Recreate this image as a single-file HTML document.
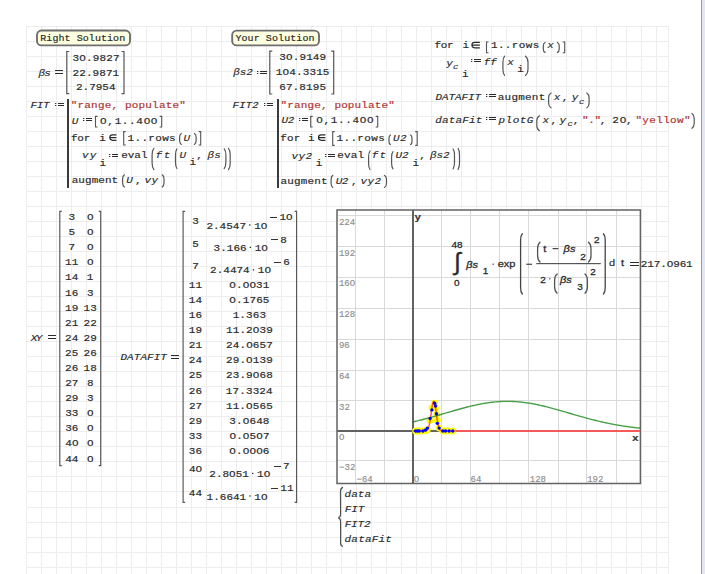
<!DOCTYPE html><html><head><meta charset="utf-8"><style>html,body{margin:0;padding:0;background:#fff;width:705px;height:574px;overflow:hidden}svg{display:block}</style></head><body><svg width="705" height="574" viewBox="0 0 705 574"><rect x="0" y="0" width="705" height="574" fill="#fff"/>
<rect x="26" y="26" width="1" height="548" fill="#ededed"/>
<rect x="41" y="26" width="1" height="548" fill="#ededed"/>
<rect x="56" y="26" width="1" height="548" fill="#ededed"/>
<rect x="71" y="26" width="1" height="548" fill="#ededed"/>
<rect x="86" y="26" width="1" height="548" fill="#ededed"/>
<rect x="101" y="26" width="1" height="548" fill="#ededed"/>
<rect x="116" y="26" width="1" height="548" fill="#ededed"/>
<rect x="131" y="26" width="1" height="548" fill="#ededed"/>
<rect x="146" y="26" width="1" height="548" fill="#ededed"/>
<rect x="161" y="26" width="1" height="548" fill="#ededed"/>
<rect x="176" y="26" width="1" height="548" fill="#ededed"/>
<rect x="191" y="26" width="1" height="548" fill="#ededed"/>
<rect x="206" y="26" width="1" height="548" fill="#ededed"/>
<rect x="221" y="26" width="1" height="548" fill="#ededed"/>
<rect x="236" y="26" width="1" height="548" fill="#ededed"/>
<rect x="251" y="26" width="1" height="548" fill="#ededed"/>
<rect x="266" y="26" width="1" height="548" fill="#ededed"/>
<rect x="281" y="26" width="1" height="548" fill="#ededed"/>
<rect x="296" y="26" width="1" height="548" fill="#ededed"/>
<rect x="311" y="26" width="1" height="548" fill="#ededed"/>
<rect x="326" y="26" width="1" height="548" fill="#ededed"/>
<rect x="341" y="26" width="1" height="548" fill="#ededed"/>
<rect x="356" y="26" width="1" height="548" fill="#ededed"/>
<rect x="371" y="26" width="1" height="548" fill="#ededed"/>
<rect x="386" y="26" width="1" height="548" fill="#ededed"/>
<rect x="401" y="26" width="1" height="548" fill="#ededed"/>
<rect x="416" y="26" width="1" height="548" fill="#ededed"/>
<rect x="431" y="26" width="1" height="548" fill="#ededed"/>
<rect x="446" y="26" width="1" height="548" fill="#ededed"/>
<rect x="461" y="26" width="1" height="548" fill="#ededed"/>
<rect x="476" y="26" width="1" height="548" fill="#ededed"/>
<rect x="491" y="26" width="1" height="548" fill="#ededed"/>
<rect x="506" y="26" width="1" height="548" fill="#ededed"/>
<rect x="521" y="26" width="1" height="548" fill="#ededed"/>
<rect x="536" y="26" width="1" height="548" fill="#ededed"/>
<rect x="551" y="26" width="1" height="548" fill="#ededed"/>
<rect x="566" y="26" width="1" height="548" fill="#ededed"/>
<rect x="581" y="26" width="1" height="548" fill="#ededed"/>
<rect x="596" y="26" width="1" height="548" fill="#ededed"/>
<rect x="611" y="26" width="1" height="548" fill="#ededed"/>
<rect x="626" y="26" width="1" height="548" fill="#ededed"/>
<rect x="641" y="26" width="1" height="548" fill="#ededed"/>
<rect x="656" y="26" width="1" height="548" fill="#ededed"/>
<rect x="668" y="26" width="1" height="548" fill="#ededed"/>
<rect x="26" y="26" width="643" height="1" fill="#ededed"/>
<rect x="26" y="41" width="643" height="1" fill="#ededed"/>
<rect x="26" y="56" width="643" height="1" fill="#ededed"/>
<rect x="26" y="71" width="643" height="1" fill="#ededed"/>
<rect x="26" y="86" width="643" height="1" fill="#ededed"/>
<rect x="26" y="101" width="643" height="1" fill="#ededed"/>
<rect x="26" y="116" width="643" height="1" fill="#ededed"/>
<rect x="26" y="131" width="643" height="1" fill="#ededed"/>
<rect x="26" y="146" width="643" height="1" fill="#ededed"/>
<rect x="26" y="161" width="643" height="1" fill="#ededed"/>
<rect x="26" y="176" width="643" height="1" fill="#ededed"/>
<rect x="26" y="191" width="643" height="1" fill="#ededed"/>
<rect x="26" y="206" width="643" height="1" fill="#ededed"/>
<rect x="26" y="221" width="643" height="1" fill="#ededed"/>
<rect x="26" y="236" width="643" height="1" fill="#ededed"/>
<rect x="26" y="251" width="643" height="1" fill="#ededed"/>
<rect x="26" y="266" width="643" height="1" fill="#ededed"/>
<rect x="26" y="281" width="643" height="1" fill="#ededed"/>
<rect x="26" y="296" width="643" height="1" fill="#ededed"/>
<rect x="26" y="311" width="643" height="1" fill="#ededed"/>
<rect x="26" y="326" width="643" height="1" fill="#ededed"/>
<rect x="26" y="341" width="643" height="1" fill="#ededed"/>
<rect x="26" y="356" width="643" height="1" fill="#ededed"/>
<rect x="26" y="371" width="643" height="1" fill="#ededed"/>
<rect x="26" y="386" width="643" height="1" fill="#ededed"/>
<rect x="26" y="401" width="643" height="1" fill="#ededed"/>
<rect x="26" y="416" width="643" height="1" fill="#ededed"/>
<rect x="26" y="431" width="643" height="1" fill="#ededed"/>
<rect x="26" y="446" width="643" height="1" fill="#ededed"/>
<rect x="26" y="461" width="643" height="1" fill="#ededed"/>
<rect x="26" y="476" width="643" height="1" fill="#ededed"/>
<rect x="26" y="491" width="643" height="1" fill="#ededed"/>
<rect x="26" y="507" width="643" height="1" fill="#ededed"/>
<rect x="26" y="522" width="643" height="1" fill="#ededed"/>
<rect x="26" y="537" width="643" height="1" fill="#ededed"/>
<rect x="26" y="552" width="643" height="1" fill="#ededed"/>
<rect x="26" y="567" width="643" height="1" fill="#ededed"/>
<rect x="701" y="0" width="1" height="574" fill="#9c9c9c"/>
<rect x="702" y="0" width="3" height="574" fill="#e4e7f2"/>
<rect x="37" y="30.5" width="93" height="14.899999999999999" rx="4.5" ry="4.5" fill="#ffffe1" stroke="#6e6e6e" stroke-width="1.9"/>
<text x="40.31 46.38 52.44 58.51 64.58 70.64 76.71 82.78 88.84 94.91 100.98 107.04 113.11 119.18" y="41.30" font-family="'Liberation Mono',monospace" font-size="10" fill="#2b2b2b" stroke="#2b2b2b" stroke-width="0.2" transform="matrix(1,0,0,0.86,0,5.782)" xml:space="preserve">Right Solution</text>
<rect x="232.2" y="30.6" width="86.80000000000001" height="14.799999999999997" rx="4.5" ry="4.5" fill="#ffffe1" stroke="#6e6e6e" stroke-width="1.9"/>
<text x="235.42 241.51 247.60 253.69 259.78 265.86 271.95 278.04 284.13 290.21 296.30 302.39 308.48" y="41.30" font-family="'Liberation Mono',monospace" font-size="10" fill="#2b2b2b" stroke="#2b2b2b" stroke-width="0.2" transform="matrix(1,0,0,0.86,0,5.782)" xml:space="preserve">Your Solution</text>
<text x="38.59 44.33" y="75.60" font-family="'Liberation Mono',monospace" font-size="11" font-style="italic" fill="#2b2b2b" stroke="#2b2b2b" stroke-width="0.16000000000000003" transform="matrix(1,0,0,0.86,0,10.584)" xml:space="preserve">βs</text>
<rect x="55" y="70" width="8" height="1" fill="#2b2b2b"/>
<rect x="55" y="73" width="8" height="1" fill="#2b2b2b"/>
<path d="M69.30,51.50 L66.80,51.50 L66.80,93.60 L69.30,93.60" fill="none" stroke="#555" stroke-width="1.2"/>
<path d="M121.50,51.50 L124.00,51.50 L124.00,93.60 L121.50,93.60" fill="none" stroke="#555" stroke-width="1.2"/>
<text x="72.61 79.34 86.06 92.79 99.51 106.23 112.96" y="60.80" font-family="'Liberation Mono',monospace" font-size="11" fill="#2b2b2b" stroke="#2b2b2b" stroke-width="0.2" transform="matrix(1,0,0,0.86,0,8.512)" xml:space="preserve">3O.9827</text>
<text x="72.53 79.21 85.89 92.58 99.26 105.95 112.63" y="75.60" font-family="'Liberation Mono',monospace" font-size="11" fill="#2b2b2b" stroke="#2b2b2b" stroke-width="0.2" transform="matrix(1,0,0,0.86,0,10.584)" xml:space="preserve">22.9871</text>
<text x="75.93 82.53 89.14 95.75 102.35 108.96" y="90.20" font-family="'Liberation Mono',monospace" font-size="11" fill="#2b2b2b" stroke="#2b2b2b" stroke-width="0.2" transform="matrix(1,0,0,0.86,0,12.628)" xml:space="preserve">2.7954</text>
<text x="233.19 239.68 246.17" y="75.20" font-family="'Liberation Mono',monospace" font-size="11" font-style="italic" fill="#2b2b2b" stroke="#2b2b2b" stroke-width="0.16000000000000003" transform="matrix(1,0,0,0.86,0,10.528)" xml:space="preserve">βs2</text>
<rect x="257" y="71" width="1.3" height="1" fill="#2b2b2b"/>
<rect x="257" y="73" width="1.3" height="1" fill="#2b2b2b"/>
<rect x="260" y="71" width="7" height="1" fill="#2b2b2b"/>
<rect x="260" y="73" width="7" height="1" fill="#2b2b2b"/>
<path d="M272.30,51.10 L269.80,51.10 L269.80,94.00 L272.30,94.00" fill="none" stroke="#555" stroke-width="1.2"/>
<path d="M331.20,51.10 L333.70,51.10 L333.70,94.00 L331.20,94.00" fill="none" stroke="#555" stroke-width="1.2"/>
<text x="279.31 286.02 292.73 299.44 306.15 312.85 319.56" y="60.20" font-family="'Liberation Mono',monospace" font-size="11" fill="#2b2b2b" stroke="#2b2b2b" stroke-width="0.2" transform="matrix(1,0,0,0.86,0,8.428)" xml:space="preserve">3O.9149</text>
<text x="275.86 282.57 289.28 295.99 302.71 309.42 316.13 322.85" y="75.00" font-family="'Liberation Mono',monospace" font-size="11" fill="#2b2b2b" stroke="#2b2b2b" stroke-width="0.2" transform="matrix(1,0,0,0.86,0,10.500)" xml:space="preserve">1O4.3315</text>
<text x="279.19 285.91 292.63 299.34 306.06 312.78 319.50" y="89.60" font-family="'Liberation Mono',monospace" font-size="11" fill="#2b2b2b" stroke="#2b2b2b" stroke-width="0.2" transform="matrix(1,0,0,0.86,0,12.544)" xml:space="preserve">67.8195</text>
<text x="30.52 36.80 43.07" y="108.00" font-family="'Liberation Mono',monospace" font-size="11" font-style="italic" fill="#2b2b2b" stroke="#2b2b2b" stroke-width="0.16000000000000003" transform="matrix(1,0,0,0.86,0,15.120)" xml:space="preserve">FIT</text>
<rect x="55" y="103" width="1.3" height="1" fill="#2b2b2b"/>
<rect x="55" y="105" width="1.3" height="1" fill="#2b2b2b"/>
<rect x="58" y="103" width="6" height="1" fill="#2b2b2b"/>
<rect x="58" y="105" width="6" height="1" fill="#2b2b2b"/>
<rect x="67" y="99" width="2" height="89" fill="#3a3a3a"/>
<text x="70.81 77.59 84.36 91.13 97.91 104.68 111.46 118.23 125.00 131.78 138.55 145.33 152.10 158.88 165.65 172.42 179.20" y="108.00" font-family="'Liberation Mono',monospace" font-size="11" fill="#b03434" stroke="#b03434" stroke-width="0.2" transform="matrix(1,0,0,0.86,0,15.120)" xml:space="preserve">&quot;range, populate&quot;</text>
<text x="71.77" y="123.80" font-family="'Liberation Mono',monospace" font-size="11" font-style="italic" fill="#2b2b2b" stroke="#2b2b2b" stroke-width="0.16000000000000003" transform="matrix(1,0,0,0.86,0,17.332)" xml:space="preserve">U</text>
<rect x="83" y="118" width="1.3" height="1" fill="#2b2b2b"/>
<rect x="83" y="120" width="1.3" height="1" fill="#2b2b2b"/>
<rect x="86" y="118" width="6" height="1" fill="#2b2b2b"/>
<rect x="86" y="120" width="6" height="1" fill="#2b2b2b"/>
<path d="M97.50,116.40 L95.50,116.40 L95.50,127.00 L97.50,127.00" fill="none" stroke="#555" stroke-width="1.1"/>
<text x="100.13 107.38 114.63 121.88 129.13 136.38 143.63 150.88" y="123.80" font-family="'Liberation Mono',monospace" font-size="11" fill="#2b2b2b" stroke="#2b2b2b" stroke-width="0.2" transform="matrix(1,0,0,0.86,0,17.332)" xml:space="preserve">O,1..4OO</text>
<path d="M159.70,116.40 L161.70,116.40 L161.70,127.00 L159.70,127.00" fill="none" stroke="#555" stroke-width="1.1"/>
<text x="70.96 77.37 83.79" y="140.90" font-family="'Liberation Mono',monospace" font-size="11" fill="#2b2b2b" stroke="#2b2b2b" stroke-width="0.2" transform="matrix(1,0,0,0.86,0,19.726)" xml:space="preserve">for</text>
<text x="99.14" y="140.90" font-family="'Liberation Mono',monospace" font-size="11" fill="#2b2b2b" stroke="#2b2b2b" stroke-width="0.2" transform="matrix(1,0,0,0.86,0,19.726)" xml:space="preserve">i</text>
<path d="M116.40,134.90 L112.50,134.90 A2.70,2.70 0 0 0 112.50,140.30 L116.40,140.30 M109.80,137.60 L116.40,137.60" fill="none" stroke="#2b2b2b" stroke-width="1.15"/>
<path d="M125.70,131.60 L123.70,131.60 L123.70,145.00 L125.70,145.00" fill="none" stroke="#555" stroke-width="1.1"/>
<text x="127.61 134.52 141.44 148.36 155.27 162.19 169.11" y="140.90" font-family="'Liberation Mono',monospace" font-size="11" fill="#2b2b2b" stroke="#2b2b2b" stroke-width="0.2" transform="matrix(1,0,0,0.86,0,19.726)" xml:space="preserve">1..rows</text>
<path d="M181.30,133.50 Q179.60,134.58 179.60,137.10 L179.60,140.80 Q179.60,143.32 181.30,144.40" fill="none" stroke="#555" stroke-width="1.2" stroke-linecap="round"/>
<text x="183.57" y="140.90" font-family="'Liberation Mono',monospace" font-size="11" font-style="italic" fill="#2b2b2b" stroke="#2b2b2b" stroke-width="0.16000000000000003" transform="matrix(1,0,0,0.86,0,19.726)" xml:space="preserve">U</text>
<path d="M194.40,133.50 Q196.10,134.58 196.10,137.10 L196.10,140.80 Q196.10,143.32 194.40,144.40" fill="none" stroke="#555" stroke-width="1.2" stroke-linecap="round"/>
<path d="M198.70,131.60 L200.70,131.60 L200.70,145.00 L198.70,145.00" fill="none" stroke="#555" stroke-width="1.1"/>
<text x="82.07 89.70" y="158.30" font-family="'Liberation Mono',monospace" font-size="11" font-style="italic" fill="#2b2b2b" stroke="#2b2b2b" stroke-width="0.16000000000000003" transform="matrix(1,0,0,0.86,0,22.162)" xml:space="preserve">vy</text>
<text x="99.44" y="166.20" font-family="'Liberation Mono',monospace" font-size="11" fill="#2b2b2b" stroke="#2b2b2b" stroke-width="0.2" transform="matrix(1,0,0,0.86,0,23.268)" xml:space="preserve">i</text>
<rect x="109" y="154" width="1.3" height="1" fill="#2b2b2b"/>
<rect x="109" y="156" width="1.3" height="1" fill="#2b2b2b"/>
<rect x="112" y="154" width="6" height="1" fill="#2b2b2b"/>
<rect x="112" y="156" width="6" height="1" fill="#2b2b2b"/>
<text x="121.29 127.83 134.37 140.91" y="158.00" font-family="'Liberation Mono',monospace" font-size="11" fill="#2b2b2b" stroke="#2b2b2b" stroke-width="0.2" transform="matrix(1,0,0,0.86,0,22.120)" xml:space="preserve">eval</text>
<path d="M153.90,148.30 Q152.10,150.25 152.10,154.80 L152.10,163.00 Q152.10,167.55 153.90,169.50" fill="none" stroke="#555" stroke-width="1.2" stroke-linecap="round"/>
<text x="155.54 163.73" y="157.80" font-family="'Liberation Mono',monospace" font-size="11" font-style="italic" fill="#2b2b2b" stroke="#2b2b2b" stroke-width="0.16000000000000003" transform="matrix(1,0,0,0.86,0,22.092)" xml:space="preserve">ft</text>
<path d="M176.90,148.90 Q175.50,150.84 175.50,155.37 L175.50,162.03 Q175.50,166.56 176.90,168.50" fill="none" stroke="#555" stroke-width="1.2" stroke-linecap="round"/>
<text x="179.62" y="157.80" font-family="'Liberation Mono',monospace" font-size="11" font-style="italic" fill="#2b2b2b" stroke="#2b2b2b" stroke-width="0.16000000000000003" transform="matrix(1,0,0,0.86,0,22.092)" xml:space="preserve">U</text>
<text x="189.44" y="165.40" font-family="'Liberation Mono',monospace" font-size="11" fill="#2b2b2b" stroke="#2b2b2b" stroke-width="0.2" transform="matrix(1,0,0,0.86,0,23.156)" xml:space="preserve">i</text>
<text x="196.29" y="158.00" font-family="'Liberation Mono',monospace" font-size="11" fill="#2b2b2b" stroke="#2b2b2b" stroke-width="0.2" transform="matrix(1,0,0,0.86,0,22.120)" xml:space="preserve">,</text>
<text x="207.49 214.23" y="158.00" font-family="'Liberation Mono',monospace" font-size="11" font-style="italic" fill="#2b2b2b" stroke="#2b2b2b" stroke-width="0.16000000000000003" transform="matrix(1,0,0,0.86,0,22.120)" xml:space="preserve">βs</text>
<path d="M224.20,148.90 Q225.90,150.84 225.90,155.37 L225.90,162.03 Q225.90,166.56 224.20,168.50" fill="none" stroke="#555" stroke-width="1.2" stroke-linecap="round"/>
<path d="M228.50,148.30 Q230.20,150.25 230.20,154.80 L230.20,163.00 Q230.20,167.55 228.50,169.50" fill="none" stroke="#555" stroke-width="1.2" stroke-linecap="round"/>
<text x="71.71 78.35 84.99 91.63 98.26 104.90 111.54" y="183.30" font-family="'Liberation Mono',monospace" font-size="11" fill="#2b2b2b" stroke="#2b2b2b" stroke-width="0.2" transform="matrix(1,0,0,0.86,0,25.662)" xml:space="preserve">augment</text>
<path d="M124.40,174.80 Q122.60,176.01 122.60,178.83 L122.60,182.97 Q122.60,185.79 124.40,187.00" fill="none" stroke="#555" stroke-width="1.2" stroke-linecap="round"/>
<text x="126.22" y="183.30" font-family="'Liberation Mono',monospace" font-size="11" font-style="italic" fill="#2b2b2b" stroke="#2b2b2b" stroke-width="0.16000000000000003" transform="matrix(1,0,0,0.86,0,25.662)" xml:space="preserve">U</text>
<text x="135.04" y="183.30" font-family="'Liberation Mono',monospace" font-size="11" fill="#2b2b2b" stroke="#2b2b2b" stroke-width="0.2" transform="matrix(1,0,0,0.86,0,25.662)" xml:space="preserve">,</text>
<text x="144.47 151.40" y="183.30" font-family="'Liberation Mono',monospace" font-size="11" font-style="italic" fill="#2b2b2b" stroke="#2b2b2b" stroke-width="0.16000000000000003" transform="matrix(1,0,0,0.86,0,25.662)" xml:space="preserve">vy</text>
<path d="M162.20,174.80 Q164.00,176.01 164.00,178.83 L164.00,182.97 Q164.00,185.79 162.20,187.00" fill="none" stroke="#555" stroke-width="1.2" stroke-linecap="round"/>
<text x="232.62 239.10 245.59 252.07" y="108.30" font-family="'Liberation Mono',monospace" font-size="11" font-style="italic" fill="#2b2b2b" stroke="#2b2b2b" stroke-width="0.16000000000000003" transform="matrix(1,0,0,0.86,0,15.162)" xml:space="preserve">FIT2</text>
<rect x="264" y="103" width="1.3" height="1" fill="#2b2b2b"/>
<rect x="264" y="105" width="1.3" height="1" fill="#2b2b2b"/>
<rect x="267" y="103" width="6" height="1" fill="#2b2b2b"/>
<rect x="267" y="105" width="6" height="1" fill="#2b2b2b"/>
<rect x="277" y="99" width="2" height="89" fill="#3a3a3a"/>
<text x="280.51 287.25 293.99 300.72 307.46 314.20 320.93 327.67 334.40 341.14 347.88 354.61 361.35 368.09 374.82 381.56 388.30" y="108.00" font-family="'Liberation Mono',monospace" font-size="11" fill="#b03434" stroke="#b03434" stroke-width="0.2" transform="matrix(1,0,0,0.86,0,15.120)" xml:space="preserve">&quot;range, populate&quot;</text>
<text x="281.41 287.67" y="123.40" font-family="'Liberation Mono',monospace" font-size="11" font-style="italic" fill="#2b2b2b" stroke="#2b2b2b" stroke-width="0.16000000000000003" transform="matrix(1,0,0,0.86,0,17.276)" xml:space="preserve">U2</text>
<rect x="299" y="118" width="1.3" height="1" fill="#2b2b2b"/>
<rect x="299" y="120" width="1.3" height="1" fill="#2b2b2b"/>
<rect x="302" y="118" width="6" height="1" fill="#2b2b2b"/>
<rect x="302" y="120" width="6" height="1" fill="#2b2b2b"/>
<path d="M312.70,116.40 L310.70,116.40 L310.70,127.00 L312.70,127.00" fill="none" stroke="#555" stroke-width="1.1"/>
<text x="316.23 323.50 330.76 338.02 345.29 352.55 359.81 367.08" y="123.40" font-family="'Liberation Mono',monospace" font-size="11" fill="#2b2b2b" stroke="#2b2b2b" stroke-width="0.2" transform="matrix(1,0,0,0.86,0,17.276)" xml:space="preserve">O,1..4OO</text>
<path d="M375.70,116.40 L377.70,116.40 L377.70,127.00 L375.70,127.00" fill="none" stroke="#555" stroke-width="1.1"/>
<text x="280.36 287.02 293.69" y="141.00" font-family="'Liberation Mono',monospace" font-size="11" fill="#2b2b2b" stroke="#2b2b2b" stroke-width="0.2" transform="matrix(1,0,0,0.86,0,19.740)" xml:space="preserve">for</text>
<text x="308.04" y="141.00" font-family="'Liberation Mono',monospace" font-size="11" fill="#2b2b2b" stroke="#2b2b2b" stroke-width="0.2" transform="matrix(1,0,0,0.86,0,19.740)" xml:space="preserve">i</text>
<path d="M325.40,134.90 L321.20,134.90 A2.70,2.70 0 0 0 321.20,140.30 L325.40,140.30 M318.50,137.60 L325.40,137.60" fill="none" stroke="#2b2b2b" stroke-width="1.15"/>
<path d="M334.70,131.60 L332.70,131.60 L332.70,145.40 L334.70,145.40" fill="none" stroke="#555" stroke-width="1.1"/>
<text x="336.51 343.46 350.41 357.36 364.31 371.26 378.21" y="141.00" font-family="'Liberation Mono',monospace" font-size="11" fill="#2b2b2b" stroke="#2b2b2b" stroke-width="0.2" transform="matrix(1,0,0,0.86,0,19.740)" xml:space="preserve">1..rows</text>
<path d="M390.40,135.00 Q389.00,135.95 389.00,138.17 L389.00,141.43 Q389.00,143.65 390.40,144.60" fill="none" stroke="#555" stroke-width="1.2" stroke-linecap="round"/>
<text x="392.91 399.97" y="141.00" font-family="'Liberation Mono',monospace" font-size="11" font-style="italic" fill="#2b2b2b" stroke="#2b2b2b" stroke-width="0.16000000000000003" transform="matrix(1,0,0,0.86,0,19.740)" xml:space="preserve">U2</text>
<path d="M410.60,135.00 Q412.00,135.95 412.00,138.17 L412.00,141.43 Q412.00,143.65 410.60,144.60" fill="none" stroke="#555" stroke-width="1.2" stroke-linecap="round"/>
<path d="M415.20,131.60 L417.20,131.60 L417.20,145.40 L415.20,145.40" fill="none" stroke="#555" stroke-width="1.1"/>
<text x="291.57 298.57 305.57" y="158.60" font-family="'Liberation Mono',monospace" font-size="11" font-style="italic" fill="#2b2b2b" stroke="#2b2b2b" stroke-width="0.16000000000000003" transform="matrix(1,0,0,0.86,0,22.204)" xml:space="preserve">vy2</text>
<text x="315.74" y="166.00" font-family="'Liberation Mono',monospace" font-size="11" fill="#2b2b2b" stroke="#2b2b2b" stroke-width="0.2" transform="matrix(1,0,0,0.86,0,23.240)" xml:space="preserve">i</text>
<rect x="325" y="154" width="1.3" height="1" fill="#2b2b2b"/>
<rect x="325" y="156" width="1.3" height="1" fill="#2b2b2b"/>
<rect x="328" y="154" width="7" height="1" fill="#2b2b2b"/>
<rect x="328" y="156" width="7" height="1" fill="#2b2b2b"/>
<text x="337.19 343.96 350.73 357.51" y="158.00" font-family="'Liberation Mono',monospace" font-size="11" fill="#2b2b2b" stroke="#2b2b2b" stroke-width="0.2" transform="matrix(1,0,0,0.86,0,22.120)" xml:space="preserve">eval</text>
<path d="M370.00,151.00 Q368.60,152.83 368.60,157.10 L368.60,163.40 Q368.60,167.67 370.00,169.50" fill="none" stroke="#555" stroke-width="1.2" stroke-linecap="round"/>
<text x="371.84 379.43" y="158.00" font-family="'Liberation Mono',monospace" font-size="11" font-style="italic" fill="#2b2b2b" stroke="#2b2b2b" stroke-width="0.16000000000000003" transform="matrix(1,0,0,0.86,0,22.120)" xml:space="preserve">ft</text>
<path d="M393.00,151.60 Q391.60,153.31 391.60,157.31 L391.60,163.19 Q391.60,167.19 393.00,168.90" fill="none" stroke="#555" stroke-width="1.2" stroke-linecap="round"/>
<text x="395.41 401.97" y="158.30" font-family="'Liberation Mono',monospace" font-size="11" font-style="italic" fill="#2b2b2b" stroke="#2b2b2b" stroke-width="0.16000000000000003" transform="matrix(1,0,0,0.86,0,22.162)" xml:space="preserve">U2</text>
<text x="412.49" y="165.80" font-family="'Liberation Mono',monospace" font-size="11" fill="#2b2b2b" stroke="#2b2b2b" stroke-width="0.2" transform="matrix(1,0,0,0.86,0,23.212)" xml:space="preserve">i</text>
<text x="419.29" y="158.30" font-family="'Liberation Mono',monospace" font-size="11" fill="#2b2b2b" stroke="#2b2b2b" stroke-width="0.2" transform="matrix(1,0,0,0.86,0,22.162)" xml:space="preserve">,</text>
<text x="429.89 436.43 442.97" y="158.40" font-family="'Liberation Mono',monospace" font-size="11" font-style="italic" fill="#2b2b2b" stroke="#2b2b2b" stroke-width="0.16000000000000003" transform="matrix(1,0,0,0.86,0,22.176)" xml:space="preserve">βs2</text>
<path d="M453.10,149.00 Q454.50,150.95 454.50,155.50 L454.50,162.30 Q454.50,166.85 453.10,168.80" fill="none" stroke="#555" stroke-width="1.2" stroke-linecap="round"/>
<path d="M458.10,148.40 Q459.50,150.35 459.50,154.90 L459.50,162.80 Q459.50,167.35 458.10,169.30" fill="none" stroke="#555" stroke-width="1.2" stroke-linecap="round"/>
<text x="280.41 287.18 293.95 300.73 307.50 314.27 321.04" y="183.60" font-family="'Liberation Mono',monospace" font-size="11" fill="#2b2b2b" stroke="#2b2b2b" stroke-width="0.2" transform="matrix(1,0,0,0.86,0,25.704)" xml:space="preserve">augment</text>
<path d="M332.80,175.30 Q331.10,176.50 331.10,179.29 L331.10,183.41 Q331.10,186.20 332.80,187.40" fill="none" stroke="#555" stroke-width="1.2" stroke-linecap="round"/>
<text x="335.81 341.77" y="183.60" font-family="'Liberation Mono',monospace" font-size="11" font-style="italic" fill="#2b2b2b" stroke="#2b2b2b" stroke-width="0.16000000000000003" transform="matrix(1,0,0,0.86,0,25.704)" xml:space="preserve">U2</text>
<text x="350.99" y="183.60" font-family="'Liberation Mono',monospace" font-size="11" fill="#2b2b2b" stroke="#2b2b2b" stroke-width="0.2" transform="matrix(1,0,0,0.86,0,25.704)" xml:space="preserve">,</text>
<text x="360.57 367.52 374.47" y="183.60" font-family="'Liberation Mono',monospace" font-size="11" font-style="italic" fill="#2b2b2b" stroke="#2b2b2b" stroke-width="0.16000000000000003" transform="matrix(1,0,0,0.86,0,25.704)" xml:space="preserve">vy2</text>
<path d="M384.40,175.30 Q386.50,176.50 386.50,179.29 L386.50,183.41 Q386.50,186.20 384.40,187.40" fill="none" stroke="#555" stroke-width="1.2" stroke-linecap="round"/>
<text x="434.46 440.67 446.89" y="48.40" font-family="'Liberation Mono',monospace" font-size="11" fill="#2b2b2b" stroke="#2b2b2b" stroke-width="0.2" transform="matrix(1,0,0,0.86,0,6.776)" xml:space="preserve">for</text>
<text x="462.39" y="48.40" font-family="'Liberation Mono',monospace" font-size="11" fill="#2b2b2b" stroke="#2b2b2b" stroke-width="0.2" transform="matrix(1,0,0,0.86,0,6.776)" xml:space="preserve">i</text>
<path d="M479.90,42.40 L474.60,42.40 A2.70,2.70 0 0 0 474.60,47.80 L479.90,47.80 M471.90,45.10 L479.90,45.10" fill="none" stroke="#2b2b2b" stroke-width="1.15"/>
<path d="M488.50,42.00 L486.50,42.00 L486.50,52.70 L488.50,52.70" fill="none" stroke="#555" stroke-width="1.1"/>
<text x="490.91 497.89 504.87 511.86 518.84 525.82 532.81" y="48.40" font-family="'Liberation Mono',monospace" font-size="11" fill="#2b2b2b" stroke="#2b2b2b" stroke-width="0.2" transform="matrix(1,0,0,0.86,0,6.776)" xml:space="preserve">1..rows</text>
<path d="M545.10,42.50 Q543.30,43.48 543.30,45.77 L543.30,49.13 Q543.30,51.42 545.10,52.40" fill="none" stroke="#555" stroke-width="1.2" stroke-linecap="round"/>
<text x="547.32" y="48.40" font-family="'Liberation Mono',monospace" font-size="11" font-style="italic" fill="#2b2b2b" stroke="#2b2b2b" stroke-width="0.16000000000000003" transform="matrix(1,0,0,0.86,0,6.776)" xml:space="preserve">x</text>
<path d="M557.40,42.50 Q559.20,43.48 559.20,45.77 L559.20,49.13 Q559.20,51.42 557.40,52.40" fill="none" stroke="#555" stroke-width="1.2" stroke-linecap="round"/>
<path d="M562.70,42.00 L564.70,42.00 L564.70,52.70 L562.70,52.70" fill="none" stroke="#555" stroke-width="1.1"/>
<text x="446.20" y="66.20" font-family="'Liberation Mono',monospace" font-size="11" font-style="italic" fill="#2b2b2b" stroke="#2b2b2b" stroke-width="0.16000000000000003" transform="matrix(1,0,0,0.86,0,9.268)" xml:space="preserve">y</text>
<text x="453.08" y="69.00" font-family="'Liberation Mono',monospace" font-size="9" font-style="italic" fill="#2b2b2b" stroke="#2b2b2b" stroke-width="0.16000000000000003" transform="matrix(1,0,0,0.86,0,9.660)" xml:space="preserve">c</text>
<text x="461.94" y="76.80" font-family="'Liberation Mono',monospace" font-size="11" fill="#2b2b2b" stroke="#2b2b2b" stroke-width="0.2" transform="matrix(1,0,0,0.86,0,10.752)" xml:space="preserve">i</text>
<rect x="471" y="59" width="1.3" height="1" fill="#2b2b2b"/>
<rect x="471" y="61" width="1.3" height="1" fill="#2b2b2b"/>
<rect x="474" y="59" width="7" height="1" fill="#2b2b2b"/>
<rect x="474" y="61" width="7" height="1" fill="#2b2b2b"/>
<text x="483.74 490.14" y="65.50" font-family="'Liberation Mono',monospace" font-size="11" font-style="italic" fill="#2b2b2b" stroke="#2b2b2b" stroke-width="0.16000000000000003" transform="matrix(1,0,0,0.86,0,9.170)" xml:space="preserve">ff</text>
<path d="M504.60,56.20 Q502.90,58.10 502.90,62.54 L502.90,69.06 Q502.90,73.50 504.60,75.40" fill="none" stroke="#555" stroke-width="1.2" stroke-linecap="round"/>
<text x="507.27" y="65.50" font-family="'Liberation Mono',monospace" font-size="11" font-style="italic" fill="#2b2b2b" stroke="#2b2b2b" stroke-width="0.16000000000000003" transform="matrix(1,0,0,0.86,0,9.170)" xml:space="preserve">x</text>
<text x="517.14" y="72.50" font-family="'Liberation Mono',monospace" font-size="11" fill="#2b2b2b" stroke="#2b2b2b" stroke-width="0.2" transform="matrix(1,0,0,0.86,0,10.150)" xml:space="preserve">i</text>
<path d="M525.50,56.20 Q528.00,58.10 528.00,62.54 L528.00,69.06 Q528.00,73.50 525.50,75.40" fill="none" stroke="#555" stroke-width="1.2" stroke-linecap="round"/>
<text x="435.59 442.09 448.59 455.08 461.58 468.07 474.57" y="99.90" font-family="'Liberation Mono',monospace" font-size="11" font-style="italic" fill="#2b2b2b" stroke="#2b2b2b" stroke-width="0.16000000000000003" transform="matrix(1,0,0,0.86,0,13.986)" xml:space="preserve">DATAFIT</text>
<rect x="486" y="94" width="1.3" height="1" fill="#2b2b2b"/>
<rect x="486" y="96" width="1.3" height="1" fill="#2b2b2b"/>
<rect x="489" y="94" width="7" height="1" fill="#2b2b2b"/>
<rect x="489" y="96" width="7" height="1" fill="#2b2b2b"/>
<text x="497.81 504.62 511.42 518.23 525.03 531.83 538.64" y="99.90" font-family="'Liberation Mono',monospace" font-size="11" fill="#2b2b2b" stroke="#2b2b2b" stroke-width="0.2" transform="matrix(1,0,0,0.86,0,13.986)" xml:space="preserve">augment</text>
<path d="M551.00,93.00 Q548.60,94.47 548.60,97.88 L548.60,102.92 Q548.60,106.33 551.00,107.80" fill="none" stroke="#555" stroke-width="1.2" stroke-linecap="round"/>
<text x="553.67" y="99.90" font-family="'Liberation Mono',monospace" font-size="11" font-style="italic" fill="#2b2b2b" stroke="#2b2b2b" stroke-width="0.16000000000000003" transform="matrix(1,0,0,0.86,0,13.986)" xml:space="preserve">x</text>
<text x="561.64" y="99.90" font-family="'Liberation Mono',monospace" font-size="11" fill="#2b2b2b" stroke="#2b2b2b" stroke-width="0.2" transform="matrix(1,0,0,0.86,0,13.986)" xml:space="preserve">,</text>
<text x="571.70" y="99.90" font-family="'Liberation Mono',monospace" font-size="11" font-style="italic" fill="#2b2b2b" stroke="#2b2b2b" stroke-width="0.16000000000000003" transform="matrix(1,0,0,0.86,0,13.986)" xml:space="preserve">y</text>
<text x="578.93" y="104.40" font-family="'Liberation Mono',monospace" font-size="9" font-style="italic" fill="#2b2b2b" stroke="#2b2b2b" stroke-width="0.16000000000000003" transform="matrix(1,0,0,0.86,0,14.616)" xml:space="preserve">c</text>
<path d="M586.80,93.00 Q589.10,94.47 589.10,97.88 L589.10,102.92 Q589.10,106.33 586.80,107.80" fill="none" stroke="#555" stroke-width="1.2" stroke-linecap="round"/>
<text x="435.30 442.05 448.81 455.56 462.32 469.07 475.83" y="122.70" font-family="'Liberation Mono',monospace" font-size="11" font-style="italic" fill="#2b2b2b" stroke="#2b2b2b" stroke-width="0.16000000000000003" transform="matrix(1,0,0,0.86,0,17.178)" xml:space="preserve">dataFit</text>
<rect x="486" y="117" width="1.3" height="1" fill="#2b2b2b"/>
<rect x="486" y="119" width="1.3" height="1" fill="#2b2b2b"/>
<rect x="489" y="117" width="7" height="1" fill="#2b2b2b"/>
<rect x="489" y="119" width="7" height="1" fill="#2b2b2b"/>
<text x="498.52 505.58 512.64 519.70 526.75" y="122.70" font-family="'Liberation Mono',monospace" font-size="11" font-style="italic" fill="#2b2b2b" stroke="#2b2b2b" stroke-width="0.16000000000000003" transform="matrix(1,0,0,0.86,0,17.178)" xml:space="preserve">plotG</text>
<path d="M539.50,115.80 Q536.80,117.28 536.80,120.72 L536.80,125.78 Q536.80,129.22 539.50,130.70" fill="none" stroke="#555" stroke-width="1.2" stroke-linecap="round"/>
<text x="542.42" y="122.70" font-family="'Liberation Mono',monospace" font-size="11" font-style="italic" fill="#2b2b2b" stroke="#2b2b2b" stroke-width="0.16000000000000003" transform="matrix(1,0,0,0.86,0,17.178)" xml:space="preserve">x</text>
<text x="550.44" y="122.70" font-family="'Liberation Mono',monospace" font-size="11" fill="#2b2b2b" stroke="#2b2b2b" stroke-width="0.2" transform="matrix(1,0,0,0.86,0,17.178)" xml:space="preserve">,</text>
<text x="559.55" y="122.70" font-family="'Liberation Mono',monospace" font-size="11" font-style="italic" fill="#2b2b2b" stroke="#2b2b2b" stroke-width="0.16000000000000003" transform="matrix(1,0,0,0.86,0,17.178)" xml:space="preserve">y</text>
<text x="567.58" y="126.50" font-family="'Liberation Mono',monospace" font-size="9" font-style="italic" fill="#2b2b2b" stroke="#2b2b2b" stroke-width="0.16000000000000003" transform="matrix(1,0,0,0.86,0,17.710)" xml:space="preserve">c</text>
<text x="572.69" y="122.70" font-family="'Liberation Mono',monospace" font-size="11" fill="#2b2b2b" stroke="#2b2b2b" stroke-width="0.2" transform="matrix(1,0,0,0.86,0,17.178)" xml:space="preserve">,</text>
<text x="582.11 588.25 594.40" y="122.70" font-family="'Liberation Mono',monospace" font-size="11" fill="#b03434" stroke="#b03434" stroke-width="0.2" transform="matrix(1,0,0,0.86,0,17.178)" xml:space="preserve">&quot;.&quot;</text>
<text x="599.69" y="122.70" font-family="'Liberation Mono',monospace" font-size="11" fill="#2b2b2b" stroke="#2b2b2b" stroke-width="0.2" transform="matrix(1,0,0,0.86,0,17.178)" xml:space="preserve">,</text>
<text x="612.23 619.68" y="122.70" font-family="'Liberation Mono',monospace" font-size="11" fill="#2b2b2b" stroke="#2b2b2b" stroke-width="0.2" transform="matrix(1,0,0,0.86,0,17.178)" xml:space="preserve">2O</text>
<text x="625.99" y="122.70" font-family="'Liberation Mono',monospace" font-size="11" fill="#2b2b2b" stroke="#2b2b2b" stroke-width="0.2" transform="matrix(1,0,0,0.86,0,17.178)" xml:space="preserve">,</text>
<text x="635.41 642.35 649.29 656.23 663.18 670.12 677.06 684.00" y="122.70" font-family="'Liberation Mono',monospace" font-size="11" fill="#b03434" stroke="#b03434" stroke-width="0.2" transform="matrix(1,0,0,0.86,0,17.178)" xml:space="preserve">&quot;yellow&quot;</text>
<path d="M691.90,113.50 Q694.20,114.97 694.20,118.38 L694.20,123.42 Q694.20,126.83 691.90,128.30" fill="none" stroke="#555" stroke-width="1.2" stroke-linecap="round"/>
<text x="30.77 35.75" y="340.90" font-family="'Liberation Mono',monospace" font-size="11" font-style="italic" fill="#2b2b2b" stroke="#2b2b2b" stroke-width="0.16000000000000003" transform="matrix(1,0,0,0.86,0,47.726)" xml:space="preserve">XY</text>
<rect x="48" y="335" width="8" height="1" fill="#2b2b2b"/>
<rect x="48" y="338" width="8" height="1" fill="#2b2b2b"/>
<path d="M61.80,211.40 L59.80,211.40 L59.80,465.60 L61.80,465.60" fill="none" stroke="#555" stroke-width="1.15"/>
<path d="M98.70,211.40 L100.70,211.40 L100.70,465.60 L98.70,465.60" fill="none" stroke="#555" stroke-width="1.15"/>
<text x="68.50" y="220.10" font-family="'Liberation Mono',monospace" font-size="11" fill="#2b2b2b" stroke="#2b2b2b" stroke-width="0.2" transform="matrix(1,0,0,0.86,0,30.814)" xml:space="preserve">3</text>
<text x="86.90" y="220.10" font-family="'Liberation Mono',monospace" font-size="11" fill="#2b2b2b" stroke="#2b2b2b" stroke-width="0.2" transform="matrix(1,0,0,0.86,0,30.814)" xml:space="preserve">O</text>
<text x="68.50" y="235.19" font-family="'Liberation Mono',monospace" font-size="11" fill="#2b2b2b" stroke="#2b2b2b" stroke-width="0.2" transform="matrix(1,0,0,0.86,0,32.927)" xml:space="preserve">5</text>
<text x="86.90" y="235.19" font-family="'Liberation Mono',monospace" font-size="11" fill="#2b2b2b" stroke="#2b2b2b" stroke-width="0.2" transform="matrix(1,0,0,0.86,0,32.927)" xml:space="preserve">O</text>
<text x="68.50" y="250.28" font-family="'Liberation Mono',monospace" font-size="11" fill="#2b2b2b" stroke="#2b2b2b" stroke-width="0.2" transform="matrix(1,0,0,0.86,0,35.039)" xml:space="preserve">7</text>
<text x="86.90" y="250.28" font-family="'Liberation Mono',monospace" font-size="11" fill="#2b2b2b" stroke="#2b2b2b" stroke-width="0.2" transform="matrix(1,0,0,0.86,0,35.039)" xml:space="preserve">O</text>
<text x="65.02 71.72" y="265.37" font-family="'Liberation Mono',monospace" font-size="11" fill="#2b2b2b" stroke="#2b2b2b" stroke-width="0.2" transform="matrix(1,0,0,0.86,0,37.152)" xml:space="preserve">11</text>
<text x="86.90" y="265.37" font-family="'Liberation Mono',monospace" font-size="11" fill="#2b2b2b" stroke="#2b2b2b" stroke-width="0.2" transform="matrix(1,0,0,0.86,0,37.152)" xml:space="preserve">O</text>
<text x="65.03 71.73" y="280.46" font-family="'Liberation Mono',monospace" font-size="11" fill="#2b2b2b" stroke="#2b2b2b" stroke-width="0.2" transform="matrix(1,0,0,0.86,0,39.264)" xml:space="preserve">14</text>
<text x="86.77" y="280.46" font-family="'Liberation Mono',monospace" font-size="11" fill="#2b2b2b" stroke="#2b2b2b" stroke-width="0.2" transform="matrix(1,0,0,0.86,0,39.264)" xml:space="preserve">1</text>
<text x="65.11 71.81" y="295.55" font-family="'Liberation Mono',monospace" font-size="11" fill="#2b2b2b" stroke="#2b2b2b" stroke-width="0.2" transform="matrix(1,0,0,0.86,0,41.377)" xml:space="preserve">16</text>
<text x="86.90" y="295.55" font-family="'Liberation Mono',monospace" font-size="11" fill="#2b2b2b" stroke="#2b2b2b" stroke-width="0.2" transform="matrix(1,0,0,0.86,0,41.377)" xml:space="preserve">3</text>
<text x="65.13 71.83" y="310.64" font-family="'Liberation Mono',monospace" font-size="11" fill="#2b2b2b" stroke="#2b2b2b" stroke-width="0.2" transform="matrix(1,0,0,0.86,0,43.490)" xml:space="preserve">19</text>
<text x="83.50 90.20" y="310.64" font-family="'Liberation Mono',monospace" font-size="11" fill="#2b2b2b" stroke="#2b2b2b" stroke-width="0.2" transform="matrix(1,0,0,0.86,0,43.490)" xml:space="preserve">13</text>
<text x="65.03 71.73" y="325.73" font-family="'Liberation Mono',monospace" font-size="11" fill="#2b2b2b" stroke="#2b2b2b" stroke-width="0.2" transform="matrix(1,0,0,0.86,0,45.602)" xml:space="preserve">21</text>
<text x="83.55 90.25" y="325.73" font-family="'Liberation Mono',monospace" font-size="11" fill="#2b2b2b" stroke="#2b2b2b" stroke-width="0.2" transform="matrix(1,0,0,0.86,0,45.602)" xml:space="preserve">22</text>
<text x="65.04 71.74" y="340.82" font-family="'Liberation Mono',monospace" font-size="11" fill="#2b2b2b" stroke="#2b2b2b" stroke-width="0.2" transform="matrix(1,0,0,0.86,0,47.715)" xml:space="preserve">24</text>
<text x="83.54 90.24" y="340.82" font-family="'Liberation Mono',monospace" font-size="11" fill="#2b2b2b" stroke="#2b2b2b" stroke-width="0.2" transform="matrix(1,0,0,0.86,0,47.715)" xml:space="preserve">29</text>
<text x="65.11 71.81" y="355.91" font-family="'Liberation Mono',monospace" font-size="11" fill="#2b2b2b" stroke="#2b2b2b" stroke-width="0.2" transform="matrix(1,0,0,0.86,0,49.827)" xml:space="preserve">25</text>
<text x="83.52 90.22" y="355.91" font-family="'Liberation Mono',monospace" font-size="11" fill="#2b2b2b" stroke="#2b2b2b" stroke-width="0.2" transform="matrix(1,0,0,0.86,0,49.827)" xml:space="preserve">26</text>
<text x="65.12 71.82" y="371.00" font-family="'Liberation Mono',monospace" font-size="11" fill="#2b2b2b" stroke="#2b2b2b" stroke-width="0.2" transform="matrix(1,0,0,0.86,0,51.940)" xml:space="preserve">26</text>
<text x="83.51 90.21" y="371.00" font-family="'Liberation Mono',monospace" font-size="11" fill="#2b2b2b" stroke="#2b2b2b" stroke-width="0.2" transform="matrix(1,0,0,0.86,0,51.940)" xml:space="preserve">18</text>
<text x="65.19 71.89" y="386.09" font-family="'Liberation Mono',monospace" font-size="11" fill="#2b2b2b" stroke="#2b2b2b" stroke-width="0.2" transform="matrix(1,0,0,0.86,0,54.053)" xml:space="preserve">27</text>
<text x="86.90" y="386.09" font-family="'Liberation Mono',monospace" font-size="11" fill="#2b2b2b" stroke="#2b2b2b" stroke-width="0.2" transform="matrix(1,0,0,0.86,0,54.053)" xml:space="preserve">8</text>
<text x="65.14 71.84" y="401.18" font-family="'Liberation Mono',monospace" font-size="11" fill="#2b2b2b" stroke="#2b2b2b" stroke-width="0.2" transform="matrix(1,0,0,0.86,0,56.165)" xml:space="preserve">29</text>
<text x="86.90" y="401.18" font-family="'Liberation Mono',monospace" font-size="11" fill="#2b2b2b" stroke="#2b2b2b" stroke-width="0.2" transform="matrix(1,0,0,0.86,0,56.165)" xml:space="preserve">3</text>
<text x="65.15 71.85" y="416.27" font-family="'Liberation Mono',monospace" font-size="11" fill="#2b2b2b" stroke="#2b2b2b" stroke-width="0.2" transform="matrix(1,0,0,0.86,0,58.278)" xml:space="preserve">33</text>
<text x="86.90" y="416.27" font-family="'Liberation Mono',monospace" font-size="11" fill="#2b2b2b" stroke="#2b2b2b" stroke-width="0.2" transform="matrix(1,0,0,0.86,0,58.278)" xml:space="preserve">O</text>
<text x="65.16 71.86" y="431.36" font-family="'Liberation Mono',monospace" font-size="11" fill="#2b2b2b" stroke="#2b2b2b" stroke-width="0.2" transform="matrix(1,0,0,0.86,0,60.390)" xml:space="preserve">36</text>
<text x="86.90" y="431.36" font-family="'Liberation Mono',monospace" font-size="11" fill="#2b2b2b" stroke="#2b2b2b" stroke-width="0.2" transform="matrix(1,0,0,0.86,0,60.390)" xml:space="preserve">O</text>
<text x="65.21 71.91" y="446.45" font-family="'Liberation Mono',monospace" font-size="11" fill="#2b2b2b" stroke="#2b2b2b" stroke-width="0.2" transform="matrix(1,0,0,0.86,0,62.503)" xml:space="preserve">4O</text>
<text x="86.90" y="446.45" font-family="'Liberation Mono',monospace" font-size="11" fill="#2b2b2b" stroke="#2b2b2b" stroke-width="0.2" transform="matrix(1,0,0,0.86,0,62.503)" xml:space="preserve">O</text>
<text x="65.15 71.85" y="461.54" font-family="'Liberation Mono',monospace" font-size="11" fill="#2b2b2b" stroke="#2b2b2b" stroke-width="0.2" transform="matrix(1,0,0,0.86,0,64.616)" xml:space="preserve">44</text>
<text x="86.90" y="461.54" font-family="'Liberation Mono',monospace" font-size="11" fill="#2b2b2b" stroke="#2b2b2b" stroke-width="0.2" transform="matrix(1,0,0,0.86,0,64.616)" xml:space="preserve">O</text>
<text x="120.49 127.12 133.75 140.38 147.01 153.64 160.27" y="360.40" font-family="'Liberation Mono',monospace" font-size="11" font-style="italic" fill="#2b2b2b" stroke="#2b2b2b" stroke-width="0.16000000000000003" transform="matrix(1,0,0,0.86,0,50.456)" xml:space="preserve">DATAFIT</text>
<rect x="171" y="355" width="8" height="1" fill="#2b2b2b"/>
<rect x="171" y="358" width="8" height="1" fill="#2b2b2b"/>
<path d="M185.10,211.30 L183.10,211.30 L183.10,502.40 L185.10,502.40" fill="none" stroke="#555" stroke-width="1.15"/>
<path d="M294.60,211.30 L296.60,211.30 L296.60,502.40 L294.60,502.40" fill="none" stroke="#555" stroke-width="1.15"/>
<text x="192.20" y="224.10" font-family="'Liberation Mono',monospace" font-size="11" fill="#2b2b2b" stroke="#2b2b2b" stroke-width="0.2" transform="matrix(1,0,0,0.86,0,31.374)" xml:space="preserve">3</text>
<text x="192.20" y="246.80" font-family="'Liberation Mono',monospace" font-size="11" fill="#2b2b2b" stroke="#2b2b2b" stroke-width="0.2" transform="matrix(1,0,0,0.86,0,34.552)" xml:space="preserve">5</text>
<text x="192.20" y="268.60" font-family="'Liberation Mono',monospace" font-size="11" fill="#2b2b2b" stroke="#2b2b2b" stroke-width="0.2" transform="matrix(1,0,0,0.86,0,37.604)" xml:space="preserve">7</text>
<text x="188.72 195.42" y="288.20" font-family="'Liberation Mono',monospace" font-size="11" fill="#2b2b2b" stroke="#2b2b2b" stroke-width="0.2" transform="matrix(1,0,0,0.86,0,40.348)" xml:space="preserve">11</text>
<text x="188.73 195.43" y="303.30" font-family="'Liberation Mono',monospace" font-size="11" fill="#2b2b2b" stroke="#2b2b2b" stroke-width="0.2" transform="matrix(1,0,0,0.86,0,42.462)" xml:space="preserve">14</text>
<text x="188.81 195.51" y="318.30" font-family="'Liberation Mono',monospace" font-size="11" fill="#2b2b2b" stroke="#2b2b2b" stroke-width="0.2" transform="matrix(1,0,0,0.86,0,44.562)" xml:space="preserve">16</text>
<text x="188.83 195.53" y="333.30" font-family="'Liberation Mono',monospace" font-size="11" fill="#2b2b2b" stroke="#2b2b2b" stroke-width="0.2" transform="matrix(1,0,0,0.86,0,46.662)" xml:space="preserve">19</text>
<text x="188.73 195.43" y="348.40" font-family="'Liberation Mono',monospace" font-size="11" fill="#2b2b2b" stroke="#2b2b2b" stroke-width="0.2" transform="matrix(1,0,0,0.86,0,48.776)" xml:space="preserve">21</text>
<text x="188.74 195.44" y="363.50" font-family="'Liberation Mono',monospace" font-size="11" fill="#2b2b2b" stroke="#2b2b2b" stroke-width="0.2" transform="matrix(1,0,0,0.86,0,50.890)" xml:space="preserve">24</text>
<text x="188.81 195.51" y="378.50" font-family="'Liberation Mono',monospace" font-size="11" fill="#2b2b2b" stroke="#2b2b2b" stroke-width="0.2" transform="matrix(1,0,0,0.86,0,52.990)" xml:space="preserve">25</text>
<text x="188.82 195.52" y="393.60" font-family="'Liberation Mono',monospace" font-size="11" fill="#2b2b2b" stroke="#2b2b2b" stroke-width="0.2" transform="matrix(1,0,0,0.86,0,55.104)" xml:space="preserve">26</text>
<text x="188.89 195.59" y="408.60" font-family="'Liberation Mono',monospace" font-size="11" fill="#2b2b2b" stroke="#2b2b2b" stroke-width="0.2" transform="matrix(1,0,0,0.86,0,57.204)" xml:space="preserve">27</text>
<text x="188.84 195.54" y="423.90" font-family="'Liberation Mono',monospace" font-size="11" fill="#2b2b2b" stroke="#2b2b2b" stroke-width="0.2" transform="matrix(1,0,0,0.86,0,59.346)" xml:space="preserve">29</text>
<text x="188.85 195.55" y="439.20" font-family="'Liberation Mono',monospace" font-size="11" fill="#2b2b2b" stroke="#2b2b2b" stroke-width="0.2" transform="matrix(1,0,0,0.86,0,61.488)" xml:space="preserve">33</text>
<text x="188.86 195.56" y="454.30" font-family="'Liberation Mono',monospace" font-size="11" fill="#2b2b2b" stroke="#2b2b2b" stroke-width="0.2" transform="matrix(1,0,0,0.86,0,63.602)" xml:space="preserve">36</text>
<text x="188.91 195.61" y="472.30" font-family="'Liberation Mono',monospace" font-size="11" fill="#2b2b2b" stroke="#2b2b2b" stroke-width="0.2" transform="matrix(1,0,0,0.86,0,66.122)" xml:space="preserve">4O</text>
<text x="188.85 195.55" y="495.90" font-family="'Liberation Mono',monospace" font-size="11" fill="#2b2b2b" stroke="#2b2b2b" stroke-width="0.2" transform="matrix(1,0,0,0.86,0,69.426)" xml:space="preserve">44</text>
<text x="229.28 235.98 242.68 249.38 256.08 262.78" y="288.20" font-family="'Liberation Mono',monospace" font-size="11" fill="#2b2b2b" stroke="#2b2b2b" stroke-width="0.2" transform="matrix(1,0,0,0.86,0,40.348)" xml:space="preserve">O.OO31</text>
<text x="229.37 236.07 242.77 249.47 256.17 262.87" y="303.30" font-family="'Liberation Mono',monospace" font-size="11" fill="#2b2b2b" stroke="#2b2b2b" stroke-width="0.2" transform="matrix(1,0,0,0.86,0,42.462)" xml:space="preserve">O.1765</text>
<text x="232.65 239.35 246.05 252.75 259.45" y="318.30" font-family="'Liberation Mono',monospace" font-size="11" fill="#2b2b2b" stroke="#2b2b2b" stroke-width="0.2" transform="matrix(1,0,0,0.86,0,44.562)" xml:space="preserve">1.363</text>
<text x="225.98 232.68 239.38 246.08 252.78 259.48 266.18" y="333.30" font-family="'Liberation Mono',monospace" font-size="11" fill="#2b2b2b" stroke="#2b2b2b" stroke-width="0.2" transform="matrix(1,0,0,0.86,0,46.662)" xml:space="preserve">11.2O39</text>
<text x="226.04 232.74 239.44 246.14 252.84 259.54 266.24" y="348.40" font-family="'Liberation Mono',monospace" font-size="11" fill="#2b2b2b" stroke="#2b2b2b" stroke-width="0.2" transform="matrix(1,0,0,0.86,0,48.776)" xml:space="preserve">24.O657</text>
<text x="225.99 232.69 239.39 246.09 252.79 259.49 266.19" y="363.50" font-family="'Liberation Mono',monospace" font-size="11" fill="#2b2b2b" stroke="#2b2b2b" stroke-width="0.2" transform="matrix(1,0,0,0.86,0,50.890)" xml:space="preserve">29.O139</text>
<text x="225.98 232.68 239.38 246.08 252.78 259.48 266.18" y="378.50" font-family="'Liberation Mono',monospace" font-size="11" fill="#2b2b2b" stroke="#2b2b2b" stroke-width="0.2" transform="matrix(1,0,0,0.86,0,52.990)" xml:space="preserve">23.9O68</text>
<text x="225.88 232.58 239.28 245.98 252.68 259.38 266.08" y="393.60" font-family="'Liberation Mono',monospace" font-size="11" fill="#2b2b2b" stroke="#2b2b2b" stroke-width="0.2" transform="matrix(1,0,0,0.86,0,55.104)" xml:space="preserve">17.3324</text>
<text x="225.95 232.65 239.35 246.05 252.75 259.45 266.15" y="408.60" font-family="'Liberation Mono',monospace" font-size="11" fill="#2b2b2b" stroke="#2b2b2b" stroke-width="0.2" transform="matrix(1,0,0,0.86,0,57.204)" xml:space="preserve">11.O565</text>
<text x="229.37 236.07 242.77 249.47 256.17 262.87" y="423.90" font-family="'Liberation Mono',monospace" font-size="11" fill="#2b2b2b" stroke="#2b2b2b" stroke-width="0.2" transform="matrix(1,0,0,0.86,0,59.346)" xml:space="preserve">3.O648</text>
<text x="229.45 236.15 242.85 249.55 256.25 262.95" y="439.20" font-family="'Liberation Mono',monospace" font-size="11" fill="#2b2b2b" stroke="#2b2b2b" stroke-width="0.2" transform="matrix(1,0,0,0.86,0,61.488)" xml:space="preserve">O.O5O7</text>
<text x="229.37 236.07 242.77 249.47 256.17 262.87" y="454.30" font-family="'Liberation Mono',monospace" font-size="11" fill="#2b2b2b" stroke="#2b2b2b" stroke-width="0.2" transform="matrix(1,0,0,0.86,0,63.602)" xml:space="preserve">O.OOO6</text>
<text x="206.43" y="228.60" font-family="'Liberation Mono',monospace" font-size="11" fill="#2b2b2b" stroke="#2b2b2b" stroke-width="0.2" transform="matrix(1,0,0,0.86,0,32.004)" xml:space="preserve">2.4547</text>
<rect x="249.13300781249998" y="224.29999999999998" width="1.3" height="1.3" fill="#2b2b2b"/>
<text x="254.14" y="228.60" font-family="'Liberation Mono',monospace" font-size="11" fill="#2b2b2b" stroke="#2b2b2b" stroke-width="0.2" transform="matrix(1,0,0,0.86,0,32.004)" xml:space="preserve">1O</text>
<rect x="270" y="217" width="7" height="1" fill="#333"/>
<text x="279.41" y="220.00" font-family="'Liberation Mono',monospace" font-size="11" fill="#2b2b2b" stroke="#2b2b2b" stroke-width="0.2" transform="matrix(1,0,0,0.86,0,30.800)" xml:space="preserve">1O</text>
<text x="213.61" y="251.00" font-family="'Liberation Mono',monospace" font-size="11" fill="#2b2b2b" stroke="#2b2b2b" stroke-width="0.2" transform="matrix(1,0,0,0.86,0,35.140)" xml:space="preserve">3.166</text>
<rect x="249.71787109375" y="246.7" width="1.3" height="1.3" fill="#2b2b2b"/>
<text x="254.72" y="251.00" font-family="'Liberation Mono',monospace" font-size="11" fill="#2b2b2b" stroke="#2b2b2b" stroke-width="0.2" transform="matrix(1,0,0,0.86,0,35.140)" xml:space="preserve">1O</text>
<rect x="271" y="239" width="7" height="1" fill="#333"/>
<text x="280.19" y="242.60" font-family="'Liberation Mono',monospace" font-size="11" fill="#2b2b2b" stroke="#2b2b2b" stroke-width="0.2" transform="matrix(1,0,0,0.86,0,33.964)" xml:space="preserve">8</text>
<text x="210.13" y="273.50" font-family="'Liberation Mono',monospace" font-size="11" fill="#2b2b2b" stroke="#2b2b2b" stroke-width="0.2" transform="matrix(1,0,0,0.86,0,38.290)" xml:space="preserve">2.4474</text>
<rect x="252.8330078125" y="269.2" width="1.3" height="1.3" fill="#2b2b2b"/>
<text x="257.84" y="273.50" font-family="'Liberation Mono',monospace" font-size="11" fill="#2b2b2b" stroke="#2b2b2b" stroke-width="0.2" transform="matrix(1,0,0,0.86,0,38.290)" xml:space="preserve">1O</text>
<rect x="274" y="262" width="7" height="1" fill="#333"/>
<text x="283.29" y="265.20" font-family="'Liberation Mono',monospace" font-size="11" fill="#2b2b2b" stroke="#2b2b2b" stroke-width="0.2" transform="matrix(1,0,0,0.86,0,37.128)" xml:space="preserve">6</text>
<text x="209.33" y="477.10" font-family="'Liberation Mono',monospace" font-size="11" fill="#2b2b2b" stroke="#2b2b2b" stroke-width="0.2" transform="matrix(1,0,0,0.86,0,66.794)" xml:space="preserve">2.8O51</text>
<rect x="252.0330078125" y="472.8" width="1.3" height="1.3" fill="#2b2b2b"/>
<text x="257.04" y="477.10" font-family="'Liberation Mono',monospace" font-size="11" fill="#2b2b2b" stroke="#2b2b2b" stroke-width="0.2" transform="matrix(1,0,0,0.86,0,66.794)" xml:space="preserve">1O</text>
<rect x="274" y="466" width="7" height="1" fill="#333"/>
<text x="283.05" y="469.20" font-family="'Liberation Mono',monospace" font-size="11" fill="#2b2b2b" stroke="#2b2b2b" stroke-width="0.2" transform="matrix(1,0,0,0.86,0,65.688)" xml:space="preserve">7</text>
<text x="206.61" y="499.60" font-family="'Liberation Mono',monospace" font-size="11" fill="#2b2b2b" stroke="#2b2b2b" stroke-width="0.2" transform="matrix(1,0,0,0.86,0,69.944)" xml:space="preserve">1.6641</text>
<rect x="249.3115234375" y="495.3" width="1.3" height="1.3" fill="#2b2b2b"/>
<text x="254.32" y="499.60" font-family="'Liberation Mono',monospace" font-size="11" fill="#2b2b2b" stroke="#2b2b2b" stroke-width="0.2" transform="matrix(1,0,0,0.86,0,69.944)" xml:space="preserve">1O</text>
<rect x="271" y="488" width="7" height="1" fill="#333"/>
<text x="280.31" y="491.30" font-family="'Liberation Mono',monospace" font-size="11" fill="#2b2b2b" stroke="#2b2b2b" stroke-width="0.2" transform="matrix(1,0,0,0.86,0,68.782)" xml:space="preserve">11</text>
<rect x="337" y="210" width="304" height="274" fill="#ffffff"/>
<rect x="355" y="210" width="1" height="273" fill="#d9d9d9"/>
<rect x="384" y="210" width="1" height="273" fill="#d9d9d9"/>
<rect x="441" y="210" width="1" height="273" fill="#d9d9d9"/>
<rect x="470" y="210" width="1" height="273" fill="#d9d9d9"/>
<rect x="499" y="210" width="1" height="273" fill="#d9d9d9"/>
<rect x="528" y="210" width="1" height="273" fill="#d9d9d9"/>
<rect x="558" y="210" width="1" height="273" fill="#d9d9d9"/>
<rect x="586" y="210" width="1" height="273" fill="#d9d9d9"/>
<rect x="616" y="210" width="1" height="273" fill="#d9d9d9"/>
<rect x="337" y="215" width="303" height="1" fill="#d9d9d9"/>
<rect x="337" y="246" width="303" height="1" fill="#d9d9d9"/>
<rect x="337" y="277" width="303" height="1" fill="#d9d9d9"/>
<rect x="337" y="308" width="303" height="1" fill="#d9d9d9"/>
<rect x="337" y="339" width="303" height="1" fill="#d9d9d9"/>
<rect x="337" y="370" width="303" height="1" fill="#d9d9d9"/>
<rect x="337" y="400" width="303" height="1" fill="#d9d9d9"/>
<rect x="337" y="460" width="303" height="1" fill="#d9d9d9"/>
<rect x="412" y="210" width="2" height="273" fill="#626262"/>
<rect x="337" y="430" width="303" height="2" fill="#626262"/>
<rect x="337" y="210" width="303.4" height="273.5" fill="none" stroke="#636363" stroke-width="1.5"/>
<text x="338.97" y="224.70" font-family="'Liberation Mono',monospace" font-size="9" fill="#8c8c8c" stroke="#8c8c8c" stroke-width="0.15" xml:space="preserve">224</text>
<text x="338.95" y="255.60" font-family="'Liberation Mono',monospace" font-size="9" fill="#8c8c8c" stroke="#8c8c8c" stroke-width="0.15" xml:space="preserve">192</text>
<text x="338.95" y="286.40" font-family="'Liberation Mono',monospace" font-size="9" fill="#8c8c8c" stroke="#8c8c8c" stroke-width="0.15" xml:space="preserve">16O</text>
<text x="338.95" y="317.20" font-family="'Liberation Mono',monospace" font-size="9" fill="#8c8c8c" stroke="#8c8c8c" stroke-width="0.15" xml:space="preserve">128</text>
<text x="338.98" y="348.00" font-family="'Liberation Mono',monospace" font-size="9" fill="#8c8c8c" stroke="#8c8c8c" stroke-width="0.15" xml:space="preserve">96</text>
<text x="338.94" y="378.70" font-family="'Liberation Mono',monospace" font-size="9" fill="#8c8c8c" stroke="#8c8c8c" stroke-width="0.15" xml:space="preserve">64</text>
<text x="339.04" y="409.50" font-family="'Liberation Mono',monospace" font-size="9" fill="#8c8c8c" stroke="#8c8c8c" stroke-width="0.15" xml:space="preserve">32</text>
<text x="339.06" y="440.00" font-family="'Liberation Mono',monospace" font-size="9" fill="#8c8c8c" stroke="#8c8c8c" stroke-width="0.15" xml:space="preserve">O</text>
<text x="339.09" y="469.60" font-family="'Liberation Mono',monospace" font-size="9" fill="#8c8c8c" stroke="#8c8c8c" stroke-width="0.15" xml:space="preserve">−32</text>
<text x="356.49" y="481.50" font-family="'Liberation Mono',monospace" font-size="9" fill="#8c8c8c" stroke="#8c8c8c" stroke-width="0.15" xml:space="preserve">−64</text>
<text x="413.66" y="481.50" font-family="'Liberation Mono',monospace" font-size="9" fill="#8c8c8c" stroke="#8c8c8c" stroke-width="0.15" xml:space="preserve">O</text>
<text x="470.54" y="481.50" font-family="'Liberation Mono',monospace" font-size="9" fill="#8c8c8c" stroke="#8c8c8c" stroke-width="0.15" xml:space="preserve">64</text>
<text x="529.75" y="481.50" font-family="'Liberation Mono',monospace" font-size="9" fill="#8c8c8c" stroke="#8c8c8c" stroke-width="0.15" xml:space="preserve">128</text>
<text x="587.15" y="481.50" font-family="'Liberation Mono',monospace" font-size="9" fill="#8c8c8c" stroke="#8c8c8c" stroke-width="0.15" xml:space="preserve">192</text>
<text x="414.45" y="220.20" font-family="'Liberation Mono',monospace" font-size="11" font-weight="bold" fill="#333" stroke="#333" stroke-width="0.2" transform="matrix(1,0,0,0.86,0,30.828)" xml:space="preserve">y</text>
<text x="632.05" y="440.70" font-family="'Liberation Mono',monospace" font-size="11" font-weight="bold" fill="#333" stroke="#333" stroke-width="0.2" transform="matrix(1,0,0,0.86,0,61.698)" xml:space="preserve">x</text>
<rect x="414" y="430" width="10" height="2" fill="#f65a5a"/>
<rect x="444" y="430" width="196" height="2" fill="#f65a5a"/>
<polyline fill="none" stroke="#f65a5a" stroke-width="1.5" points="412.90,431.00 413.13,431.00 413.35,431.00 413.58,431.00 413.81,431.00 414.03,431.00 414.26,431.00 414.48,431.00 414.71,431.00 414.94,431.00 415.16,431.00 415.39,431.00 415.62,431.00 415.84,431.00 416.07,431.00 416.29,431.00 416.52,431.00 416.75,431.00 416.97,431.00 417.20,431.00 417.43,431.00 417.65,431.00 417.88,431.00 418.11,431.00 418.33,431.00 418.56,431.00 418.78,431.00 419.01,431.00 419.24,431.00 419.46,431.00 419.69,431.00 419.92,431.00 420.14,431.00 420.37,431.00 420.60,431.00 420.82,431.00 421.05,431.00 421.27,431.00 421.50,431.00 421.73,431.00 421.95,431.00 422.18,431.00 422.41,431.00 422.63,431.00 422.86,431.00 423.08,431.00 423.31,430.99 423.54,430.99 423.76,430.99 423.99,430.98 424.22,430.97 424.44,430.96 424.67,430.95 424.90,430.93 425.12,430.91 425.35,430.87 425.57,430.83 425.80,430.78 426.03,430.70 426.25,430.61 426.48,430.50 426.71,430.36 426.93,430.18 427.16,429.96 427.38,429.69 427.61,429.37 427.84,428.99 428.06,428.53 428.29,428.00 428.52,427.38 428.74,426.67 428.97,425.86 429.20,424.95 429.42,423.93 429.65,422.81 429.87,421.58 430.10,420.25 430.33,418.84 430.55,417.35 430.78,415.80 431.01,414.21 431.23,412.60 431.46,411.00 431.69,409.43 431.91,407.92 432.14,406.50 432.36,405.21 432.59,404.06 432.82,403.08 433.04,402.30 433.27,401.73 433.50,401.39 433.72,401.29 433.95,401.42 434.17,401.78 434.40,402.37 434.63,403.17 434.85,404.17 435.08,405.33 435.31,406.64 435.53,408.07 435.76,409.59 435.99,411.16 436.21,412.77 436.44,414.38 436.66,415.96 436.89,417.51 437.12,418.99 437.34,420.40 437.57,421.71 437.80,422.93 438.02,424.04 438.25,425.05 438.48,425.95 438.70,426.75 438.93,427.45 439.15,428.06 439.38,428.58 439.61,429.03 439.83,429.41 440.06,429.72 440.29,429.98 440.51,430.20 440.74,430.37 440.96,430.51 441.19,430.62 441.42,430.71 441.64,430.78 441.87,430.84 442.10,430.88 442.32,430.91 442.55,430.93 442.78,430.95 443.00,430.96 443.23,430.97 443.45,430.98 443.68,430.99 443.91,430.99 444.13,430.99 444.36,431.00 444.59,431.00 444.81,431.00 445.04,431.00 445.26,431.00 445.49,431.00 445.72,431.00 445.94,431.00 446.17,431.00 446.40,431.00 446.62,431.00 446.85,431.00 447.08,431.00 447.30,431.00 447.53,431.00 447.75,431.00 447.98,431.00 448.21,431.00 448.43,431.00 448.66,431.00 448.89,431.00 449.11,431.00 449.34,431.00 449.57,431.00 449.79,431.00 450.02,431.00 450.24,431.00 450.47,431.00 450.70,431.00 450.92,431.00 451.15,431.00 451.38,431.00 451.60,431.00 451.83,431.00 452.05,431.00 452.28,431.00 452.51,431.00 452.73,431.00 452.96,431.00 453.19,431.00 453.41,431.00 453.64,431.00 453.87,431.00 454.09,431.00 454.32,431.00 454.54,431.00 454.77,431.00 455.00,431.00 455.22,431.00 455.45,431.00 455.68,431.00 455.90,431.00 456.13,431.00 456.35,431.00 456.58,431.00 456.81,431.00 457.03,431.00 457.26,431.00 457.49,431.00 457.71,431.00 457.94,431.00 458.17,431.00 458.39,431.00 458.62,431.00 458.84,431.00 459.07,431.00 459.30,431.00 459.52,431.00 459.75,431.00 459.98,431.00 460.20,431.00 460.43,431.00 460.66,431.00 460.88,431.00 461.11,431.00 461.33,431.00 461.56,431.00 461.79,431.00 462.01,431.00 462.24,431.00 462.47,431.00 462.69,431.00 462.92,431.00 463.14,431.00 463.37,431.00 463.60,431.00 463.82,431.00 464.05,431.00 464.28,431.00 464.50,431.00 464.73,431.00 464.96,431.00 465.18,431.00 465.41,431.00 465.63,431.00 465.86,431.00 466.09,431.00 466.31,431.00 466.54,431.00 466.77,431.00 466.99,431.00 467.22,431.00 467.45,431.00 467.67,431.00 467.90,431.00 468.12,431.00 468.35,431.00 468.58,431.00 468.80,431.00 469.03,431.00 469.26,431.00 469.48,431.00 469.71,431.00 469.93,431.00 470.16,431.00 470.39,431.00 470.61,431.00 470.84,431.00 471.07,431.00 471.29,431.00 471.52,431.00 471.75,431.00 471.97,431.00 472.20,431.00 472.42,431.00 472.65,431.00 472.88,431.00 473.10,431.00 473.33,431.00 473.56,431.00 473.78,431.00 474.01,431.00 474.23,431.00 474.46,431.00 474.69,431.00 474.91,431.00 475.14,431.00 475.37,431.00 475.59,431.00 475.82,431.00 476.05,431.00 476.27,431.00 476.50,431.00 476.72,431.00 476.95,431.00 477.18,431.00 477.40,431.00 477.63,431.00 477.86,431.00 478.08,431.00 478.31,431.00 478.54,431.00 478.76,431.00 478.99,431.00 479.21,431.00 479.44,431.00 479.67,431.00 479.89,431.00 480.12,431.00 480.35,431.00 480.57,431.00 480.80,431.00 481.02,431.00 481.25,431.00 481.48,431.00 481.70,431.00 481.93,431.00 482.16,431.00 482.38,431.00 482.61,431.00 482.84,431.00 483.06,431.00 483.29,431.00 483.51,431.00 483.74,431.00 483.97,431.00 484.19,431.00 484.42,431.00 484.65,431.00 484.87,431.00 485.10,431.00 485.32,431.00 485.55,431.00 485.78,431.00 486.00,431.00 486.23,431.00 486.46,431.00 486.68,431.00 486.91,431.00 487.14,431.00 487.36,431.00 487.59,431.00 487.81,431.00 488.04,431.00 488.27,431.00 488.49,431.00 488.72,431.00 488.95,431.00 489.17,431.00 489.40,431.00 489.63,431.00 489.85,431.00 490.08,431.00 490.30,431.00 490.53,431.00 490.76,431.00 490.98,431.00 491.21,431.00 491.44,431.00 491.66,431.00 491.89,431.00 492.11,431.00 492.34,431.00 492.57,431.00 492.79,431.00 493.02,431.00 493.25,431.00 493.47,431.00 493.70,431.00 493.93,431.00 494.15,431.00 494.38,431.00 494.60,431.00 494.83,431.00 495.06,431.00 495.28,431.00 495.51,431.00 495.74,431.00 495.96,431.00 496.19,431.00 496.42,431.00 496.64,431.00 496.87,431.00 497.09,431.00 497.32,431.00 497.55,431.00 497.77,431.00 498.00,431.00 498.23,431.00 498.45,431.00 498.68,431.00 498.90,431.00 499.13,431.00 499.36,431.00 499.58,431.00 499.81,431.00 500.04,431.00 500.26,431.00 500.49,431.00 500.72,431.00 500.94,431.00 501.17,431.00 501.39,431.00 501.62,431.00 501.85,431.00 502.07,431.00 502.30,431.00 502.53,431.00 502.75,431.00 502.98,431.00 503.20,431.00 503.43,431.00 503.66,431.00 503.88,431.00 504.11,431.00 504.34,431.00 504.56,431.00 504.79,431.00 505.02,431.00 505.24,431.00 505.47,431.00 505.69,431.00 505.92,431.00 506.15,431.00 506.37,431.00 506.60,431.00 506.83,431.00 507.05,431.00 507.28,431.00 507.51,431.00 507.73,431.00 507.96,431.00 508.18,431.00 508.41,431.00 508.64,431.00 508.86,431.00 509.09,431.00 509.32,431.00 509.54,431.00 509.77,431.00 509.99,431.00 510.22,431.00 510.45,431.00 510.67,431.00 510.90,431.00 511.13,431.00 511.35,431.00 511.58,431.00 511.81,431.00 512.03,431.00 512.26,431.00 512.48,431.00 512.71,431.00 512.94,431.00 513.16,431.00 513.39,431.00 513.62,431.00 513.84,431.00 514.07,431.00 514.29,431.00 514.52,431.00 514.75,431.00 514.97,431.00 515.20,431.00 515.43,431.00 515.65,431.00 515.88,431.00 516.11,431.00 516.33,431.00 516.56,431.00 516.78,431.00 517.01,431.00 517.24,431.00 517.46,431.00 517.69,431.00 517.92,431.00 518.14,431.00 518.37,431.00 518.60,431.00 518.82,431.00 519.05,431.00 519.27,431.00 519.50,431.00 519.73,431.00 519.95,431.00 520.18,431.00 520.41,431.00 520.63,431.00 520.86,431.00 521.08,431.00 521.31,431.00 521.54,431.00 521.76,431.00 521.99,431.00 522.22,431.00 522.44,431.00 522.67,431.00 522.90,431.00 523.12,431.00 523.35,431.00 523.57,431.00 523.80,431.00 524.03,431.00 524.25,431.00 524.48,431.00 524.71,431.00 524.93,431.00 525.16,431.00 525.39,431.00 525.61,431.00 525.84,431.00 526.06,431.00 526.29,431.00 526.52,431.00 526.74,431.00 526.97,431.00 527.20,431.00 527.42,431.00 527.65,431.00 527.87,431.00 528.10,431.00 528.33,431.00 528.55,431.00 528.78,431.00 529.01,431.00 529.23,431.00 529.46,431.00 529.69,431.00 529.91,431.00 530.14,431.00 530.36,431.00 530.59,431.00 530.82,431.00 531.04,431.00 531.27,431.00 531.50,431.00 531.72,431.00 531.95,431.00 532.17,431.00 532.40,431.00 532.63,431.00 532.85,431.00 533.08,431.00 533.31,431.00 533.53,431.00 533.76,431.00 533.99,431.00 534.21,431.00 534.44,431.00 534.66,431.00 534.89,431.00 535.12,431.00 535.34,431.00 535.57,431.00 535.80,431.00 536.02,431.00 536.25,431.00 536.48,431.00 536.70,431.00 536.93,431.00 537.15,431.00 537.38,431.00 537.61,431.00 537.83,431.00 538.06,431.00 538.29,431.00 538.51,431.00 538.74,431.00 538.96,431.00 539.19,431.00 539.42,431.00 539.64,431.00 539.87,431.00 540.10,431.00 540.32,431.00 540.55,431.00 540.78,431.00 541.00,431.00 541.23,431.00 541.45,431.00 541.68,431.00 541.91,431.00 542.13,431.00 542.36,431.00 542.59,431.00 542.81,431.00 543.04,431.00 543.26,431.00 543.49,431.00 543.72,431.00 543.94,431.00 544.17,431.00 544.40,431.00 544.62,431.00 544.85,431.00 545.08,431.00 545.30,431.00 545.53,431.00 545.75,431.00 545.98,431.00 546.21,431.00 546.43,431.00 546.66,431.00 546.89,431.00 547.11,431.00 547.34,431.00 547.57,431.00 547.79,431.00 548.02,431.00 548.24,431.00 548.47,431.00 548.70,431.00 548.92,431.00 549.15,431.00 549.38,431.00 549.60,431.00 549.83,431.00 550.05,431.00 550.28,431.00 550.51,431.00 550.73,431.00 550.96,431.00 551.19,431.00 551.41,431.00 551.64,431.00 551.87,431.00 552.09,431.00 552.32,431.00 552.54,431.00 552.77,431.00 553.00,431.00 553.22,431.00 553.45,431.00 553.68,431.00 553.90,431.00 554.13,431.00 554.36,431.00 554.58,431.00 554.81,431.00 555.03,431.00 555.26,431.00 555.49,431.00 555.71,431.00 555.94,431.00 556.17,431.00 556.39,431.00 556.62,431.00 556.84,431.00 557.07,431.00 557.30,431.00 557.52,431.00 557.75,431.00 557.98,431.00 558.20,431.00 558.43,431.00 558.66,431.00 558.88,431.00 559.11,431.00 559.33,431.00 559.56,431.00 559.79,431.00 560.01,431.00 560.24,431.00 560.47,431.00 560.69,431.00 560.92,431.00 561.14,431.00 561.37,431.00 561.60,431.00 561.82,431.00 562.05,431.00 562.28,431.00 562.50,431.00 562.73,431.00 562.96,431.00 563.18,431.00 563.41,431.00 563.63,431.00 563.86,431.00 564.09,431.00 564.31,431.00 564.54,431.00 564.77,431.00 564.99,431.00 565.22,431.00 565.45,431.00 565.67,431.00 565.90,431.00 566.12,431.00 566.35,431.00 566.58,431.00 566.80,431.00 567.03,431.00 567.26,431.00 567.48,431.00 567.71,431.00 567.93,431.00 568.16,431.00 568.39,431.00 568.61,431.00 568.84,431.00 569.07,431.00 569.29,431.00 569.52,431.00 569.75,431.00 569.97,431.00 570.20,431.00 570.42,431.00 570.65,431.00 570.88,431.00 571.10,431.00 571.33,431.00 571.56,431.00 571.78,431.00 572.01,431.00 572.23,431.00 572.46,431.00 572.69,431.00 572.91,431.00 573.14,431.00 573.37,431.00 573.59,431.00 573.82,431.00 574.05,431.00 574.27,431.00 574.50,431.00 574.72,431.00 574.95,431.00 575.18,431.00 575.40,431.00 575.63,431.00 575.86,431.00 576.08,431.00 576.31,431.00 576.54,431.00 576.76,431.00 576.99,431.00 577.21,431.00 577.44,431.00 577.67,431.00 577.89,431.00 578.12,431.00 578.35,431.00 578.57,431.00 578.80,431.00 579.02,431.00 579.25,431.00 579.48,431.00 579.70,431.00 579.93,431.00 580.16,431.00 580.38,431.00 580.61,431.00 580.84,431.00 581.06,431.00 581.29,431.00 581.51,431.00 581.74,431.00 581.97,431.00 582.19,431.00 582.42,431.00 582.65,431.00 582.87,431.00 583.10,431.00 583.33,431.00 583.55,431.00 583.78,431.00 584.00,431.00 584.23,431.00 584.46,431.00 584.68,431.00 584.91,431.00 585.14,431.00 585.36,431.00 585.59,431.00 585.81,431.00 586.04,431.00 586.27,431.00 586.49,431.00 586.72,431.00 586.95,431.00 587.17,431.00 587.40,431.00 587.63,431.00 587.85,431.00 588.08,431.00 588.30,431.00 588.53,431.00 588.76,431.00 588.98,431.00 589.21,431.00 589.44,431.00 589.66,431.00 589.89,431.00 590.11,431.00 590.34,431.00 590.57,431.00 590.79,431.00 591.02,431.00 591.25,431.00 591.47,431.00 591.70,431.00 591.93,431.00 592.15,431.00 592.38,431.00 592.60,431.00 592.83,431.00 593.06,431.00 593.28,431.00 593.51,431.00 593.74,431.00 593.96,431.00 594.19,431.00 594.42,431.00 594.64,431.00 594.87,431.00 595.09,431.00 595.32,431.00 595.55,431.00 595.77,431.00 596.00,431.00 596.23,431.00 596.45,431.00 596.68,431.00 596.90,431.00 597.13,431.00 597.36,431.00 597.58,431.00 597.81,431.00 598.04,431.00 598.26,431.00 598.49,431.00 598.72,431.00 598.94,431.00 599.17,431.00 599.39,431.00 599.62,431.00 599.85,431.00 600.07,431.00 600.30,431.00 600.53,431.00 600.75,431.00 600.98,431.00 601.20,431.00 601.43,431.00 601.66,431.00 601.88,431.00 602.11,431.00 602.34,431.00 602.56,431.00 602.79,431.00 603.02,431.00 603.24,431.00 603.47,431.00 603.69,431.00 603.92,431.00 604.15,431.00 604.37,431.00 604.60,431.00 604.83,431.00 605.05,431.00 605.28,431.00 605.51,431.00 605.73,431.00 605.96,431.00 606.18,431.00 606.41,431.00 606.64,431.00 606.86,431.00 607.09,431.00 607.32,431.00 607.54,431.00 607.77,431.00 607.99,431.00 608.22,431.00 608.45,431.00 608.67,431.00 608.90,431.00 609.13,431.00 609.35,431.00 609.58,431.00 609.81,431.00 610.03,431.00 610.26,431.00 610.48,431.00 610.71,431.00 610.94,431.00 611.16,431.00 611.39,431.00 611.62,431.00 611.84,431.00 612.07,431.00 612.30,431.00 612.52,431.00 612.75,431.00 612.97,431.00 613.20,431.00 613.43,431.00 613.65,431.00 613.88,431.00 614.11,431.00 614.33,431.00 614.56,431.00 614.78,431.00 615.01,431.00 615.24,431.00 615.46,431.00 615.69,431.00 615.92,431.00 616.14,431.00 616.37,431.00 616.60,431.00 616.82,431.00 617.05,431.00 617.27,431.00 617.50,431.00 617.73,431.00 617.95,431.00 618.18,431.00 618.41,431.00 618.63,431.00 618.86,431.00 619.08,431.00 619.31,431.00 619.54,431.00 619.76,431.00 619.99,431.00 620.22,431.00 620.44,431.00 620.67,431.00 620.90,431.00 621.12,431.00 621.35,431.00 621.57,431.00 621.80,431.00 622.03,431.00 622.25,431.00 622.48,431.00 622.71,431.00 622.93,431.00 623.16,431.00 623.39,431.00 623.61,431.00 623.84,431.00 624.06,431.00 624.29,431.00 624.52,431.00 624.74,431.00 624.97,431.00 625.20,431.00 625.42,431.00 625.65,431.00 625.87,431.00 626.10,431.00 626.33,431.00 626.55,431.00 626.78,431.00 627.01,431.00 627.23,431.00 627.46,431.00 627.69,431.00 627.91,431.00 628.14,431.00 628.36,431.00 628.59,431.00 628.82,431.00 629.04,431.00 629.27,431.00 629.50,431.00 629.72,431.00 629.95,431.00 630.17,431.00 630.40,431.00 630.63,431.00 630.85,431.00 631.08,431.00 631.31,431.00 631.53,431.00 631.76,431.00 631.99,431.00 632.21,431.00 632.44,431.00 632.66,431.00 632.89,431.00 633.12,431.00 633.34,431.00 633.57,431.00 633.80,431.00 634.02,431.00 634.25,431.00 634.48,431.00 634.70,431.00 634.93,431.00 635.15,431.00 635.38,431.00 635.61,431.00 635.83,431.00 636.06,431.00 636.29,431.00 636.51,431.00 636.74,431.00 636.96,431.00 637.19,431.00 637.42,431.00 637.64,431.00 637.87,431.00 638.10,431.00 638.32,431.00 638.55,431.00 638.78,431.00 639.00,431.00 639.23,431.00 639.45,431.00 639.68,431.00 639.91,431.00 640.00,431.00"/>
<defs><clipPath id="yc"><circle cx="415.62" cy="431.00" r="3.4"/><circle cx="417.43" cy="431.00" r="3.4"/><circle cx="419.24" cy="431.00" r="3.4"/><circle cx="422.86" cy="431.00" r="3.4"/><circle cx="425.57" cy="430.83" r="3.4"/><circle cx="427.38" cy="429.69" r="3.4"/><circle cx="430.10" cy="420.25" r="3.4"/><circle cx="431.91" cy="407.92" r="3.4"/><circle cx="434.63" cy="403.17" r="3.4"/><circle cx="435.53" cy="408.07" r="3.4"/><circle cx="436.44" cy="414.38" r="3.4"/><circle cx="437.34" cy="420.40" r="3.4"/><circle cx="439.15" cy="428.06" r="3.4"/><circle cx="442.78" cy="430.95" r="3.4"/><circle cx="445.49" cy="431.00" r="3.4"/><circle cx="449.11" cy="431.00" r="3.4"/><circle cx="452.73" cy="431.00" r="3.4"/></clipPath></defs>
<g fill="#ffff00"><circle cx="415.62" cy="431.00" r="3.4"/><circle cx="417.43" cy="431.00" r="3.4"/><circle cx="419.24" cy="431.00" r="3.4"/><circle cx="422.86" cy="431.00" r="3.4"/><circle cx="425.57" cy="430.83" r="3.4"/><circle cx="427.38" cy="429.69" r="3.4"/><circle cx="430.10" cy="420.25" r="3.4"/><circle cx="431.91" cy="407.92" r="3.4"/><circle cx="434.63" cy="403.17" r="3.4"/><circle cx="435.53" cy="408.07" r="3.4"/><circle cx="436.44" cy="414.38" r="3.4"/><circle cx="437.34" cy="420.40" r="3.4"/><circle cx="439.15" cy="428.06" r="3.4"/><circle cx="442.78" cy="430.95" r="3.4"/><circle cx="445.49" cy="431.00" r="3.4"/><circle cx="449.11" cy="431.00" r="3.4"/><circle cx="452.73" cy="431.00" r="3.4"/></g>
<polyline clip-path="url(#yc)" fill="none" stroke="#ff3000" stroke-opacity="0.75" stroke-width="1.5" points="412.90,431.00 413.13,431.00 413.35,431.00 413.58,431.00 413.81,431.00 414.03,431.00 414.26,431.00 414.48,431.00 414.71,431.00 414.94,431.00 415.16,431.00 415.39,431.00 415.62,431.00 415.84,431.00 416.07,431.00 416.29,431.00 416.52,431.00 416.75,431.00 416.97,431.00 417.20,431.00 417.43,431.00 417.65,431.00 417.88,431.00 418.11,431.00 418.33,431.00 418.56,431.00 418.78,431.00 419.01,431.00 419.24,431.00 419.46,431.00 419.69,431.00 419.92,431.00 420.14,431.00 420.37,431.00 420.60,431.00 420.82,431.00 421.05,431.00 421.27,431.00 421.50,431.00 421.73,431.00 421.95,431.00 422.18,431.00 422.41,431.00 422.63,431.00 422.86,431.00 423.08,431.00 423.31,430.99 423.54,430.99 423.76,430.99 423.99,430.98 424.22,430.97 424.44,430.96 424.67,430.95 424.90,430.93 425.12,430.91 425.35,430.87 425.57,430.83 425.80,430.78 426.03,430.70 426.25,430.61 426.48,430.50 426.71,430.36 426.93,430.18 427.16,429.96 427.38,429.69 427.61,429.37 427.84,428.99 428.06,428.53 428.29,428.00 428.52,427.38 428.74,426.67 428.97,425.86 429.20,424.95 429.42,423.93 429.65,422.81 429.87,421.58 430.10,420.25 430.33,418.84 430.55,417.35 430.78,415.80 431.01,414.21 431.23,412.60 431.46,411.00 431.69,409.43 431.91,407.92 432.14,406.50 432.36,405.21 432.59,404.06 432.82,403.08 433.04,402.30 433.27,401.73 433.50,401.39 433.72,401.29 433.95,401.42 434.17,401.78 434.40,402.37 434.63,403.17 434.85,404.17 435.08,405.33 435.31,406.64 435.53,408.07 435.76,409.59 435.99,411.16 436.21,412.77 436.44,414.38 436.66,415.96 436.89,417.51 437.12,418.99 437.34,420.40 437.57,421.71 437.80,422.93 438.02,424.04 438.25,425.05 438.48,425.95 438.70,426.75 438.93,427.45 439.15,428.06 439.38,428.58 439.61,429.03 439.83,429.41 440.06,429.72 440.29,429.98 440.51,430.20 440.74,430.37 440.96,430.51 441.19,430.62 441.42,430.71 441.64,430.78 441.87,430.84 442.10,430.88 442.32,430.91 442.55,430.93 442.78,430.95 443.00,430.96 443.23,430.97 443.45,430.98 443.68,430.99 443.91,430.99 444.13,430.99 444.36,431.00 444.59,431.00 444.81,431.00 445.04,431.00 445.26,431.00 445.49,431.00 445.72,431.00 445.94,431.00 446.17,431.00 446.40,431.00 446.62,431.00 446.85,431.00 447.08,431.00 447.30,431.00 447.53,431.00 447.75,431.00 447.98,431.00 448.21,431.00 448.43,431.00 448.66,431.00 448.89,431.00 449.11,431.00 449.34,431.00 449.57,431.00 449.79,431.00 450.02,431.00 450.24,431.00 450.47,431.00 450.70,431.00 450.92,431.00 451.15,431.00 451.38,431.00 451.60,431.00 451.83,431.00 452.05,431.00 452.28,431.00 452.51,431.00 452.73,431.00 452.96,431.00 453.19,431.00 453.41,431.00 453.64,431.00 453.87,431.00 454.09,431.00 454.32,431.00 454.54,431.00 454.77,431.00 455.00,431.00 455.22,431.00 455.45,431.00 455.68,431.00 455.90,431.00 456.13,431.00 456.35,431.00 456.58,431.00 456.81,431.00 457.03,431.00 457.26,431.00 457.49,431.00 457.71,431.00 457.94,431.00 458.17,431.00 458.39,431.00 458.62,431.00 458.84,431.00 459.07,431.00 459.30,431.00 459.52,431.00 459.75,431.00 459.98,431.00 460.20,431.00 460.43,431.00 460.66,431.00 460.88,431.00 461.11,431.00 461.33,431.00 461.56,431.00 461.79,431.00 462.01,431.00 462.24,431.00 462.47,431.00 462.69,431.00 462.92,431.00 463.14,431.00 463.37,431.00 463.60,431.00 463.82,431.00 464.05,431.00 464.28,431.00 464.50,431.00 464.73,431.00 464.96,431.00 465.18,431.00 465.41,431.00 465.63,431.00 465.86,431.00 466.09,431.00 466.31,431.00 466.54,431.00 466.77,431.00 466.99,431.00 467.22,431.00 467.45,431.00 467.67,431.00 467.90,431.00 468.12,431.00 468.35,431.00 468.58,431.00 468.80,431.00 469.03,431.00 469.26,431.00 469.48,431.00 469.71,431.00 469.93,431.00 470.16,431.00 470.39,431.00 470.61,431.00 470.84,431.00 471.07,431.00 471.29,431.00 471.52,431.00 471.75,431.00 471.97,431.00 472.20,431.00 472.42,431.00 472.65,431.00 472.88,431.00 473.10,431.00 473.33,431.00 473.56,431.00 473.78,431.00 474.01,431.00 474.23,431.00 474.46,431.00 474.69,431.00 474.91,431.00 475.14,431.00 475.37,431.00 475.59,431.00 475.82,431.00 476.05,431.00 476.27,431.00 476.50,431.00 476.72,431.00 476.95,431.00 477.18,431.00 477.40,431.00 477.63,431.00 477.86,431.00 478.08,431.00 478.31,431.00 478.54,431.00 478.76,431.00 478.99,431.00 479.21,431.00 479.44,431.00 479.67,431.00 479.89,431.00 480.12,431.00 480.35,431.00 480.57,431.00 480.80,431.00 481.02,431.00 481.25,431.00 481.48,431.00 481.70,431.00 481.93,431.00 482.16,431.00 482.38,431.00 482.61,431.00 482.84,431.00 483.06,431.00 483.29,431.00 483.51,431.00 483.74,431.00 483.97,431.00 484.19,431.00 484.42,431.00 484.65,431.00 484.87,431.00 485.10,431.00 485.32,431.00 485.55,431.00 485.78,431.00 486.00,431.00 486.23,431.00 486.46,431.00 486.68,431.00 486.91,431.00 487.14,431.00 487.36,431.00 487.59,431.00 487.81,431.00 488.04,431.00 488.27,431.00 488.49,431.00 488.72,431.00 488.95,431.00 489.17,431.00 489.40,431.00 489.63,431.00 489.85,431.00 490.08,431.00 490.30,431.00 490.53,431.00 490.76,431.00 490.98,431.00 491.21,431.00 491.44,431.00 491.66,431.00 491.89,431.00 492.11,431.00 492.34,431.00 492.57,431.00 492.79,431.00 493.02,431.00 493.25,431.00 493.47,431.00 493.70,431.00 493.93,431.00 494.15,431.00 494.38,431.00 494.60,431.00 494.83,431.00 495.06,431.00 495.28,431.00 495.51,431.00 495.74,431.00 495.96,431.00 496.19,431.00 496.42,431.00 496.64,431.00 496.87,431.00 497.09,431.00 497.32,431.00 497.55,431.00 497.77,431.00 498.00,431.00 498.23,431.00 498.45,431.00 498.68,431.00 498.90,431.00 499.13,431.00 499.36,431.00 499.58,431.00 499.81,431.00 500.04,431.00 500.26,431.00 500.49,431.00 500.72,431.00 500.94,431.00 501.17,431.00 501.39,431.00 501.62,431.00 501.85,431.00 502.07,431.00 502.30,431.00 502.53,431.00 502.75,431.00 502.98,431.00 503.20,431.00 503.43,431.00 503.66,431.00 503.88,431.00 504.11,431.00 504.34,431.00 504.56,431.00 504.79,431.00 505.02,431.00 505.24,431.00 505.47,431.00 505.69,431.00 505.92,431.00 506.15,431.00 506.37,431.00 506.60,431.00 506.83,431.00 507.05,431.00 507.28,431.00 507.51,431.00 507.73,431.00 507.96,431.00 508.18,431.00 508.41,431.00 508.64,431.00 508.86,431.00 509.09,431.00 509.32,431.00 509.54,431.00 509.77,431.00 509.99,431.00 510.22,431.00 510.45,431.00 510.67,431.00 510.90,431.00 511.13,431.00 511.35,431.00 511.58,431.00 511.81,431.00 512.03,431.00 512.26,431.00 512.48,431.00 512.71,431.00 512.94,431.00 513.16,431.00 513.39,431.00 513.62,431.00 513.84,431.00 514.07,431.00 514.29,431.00 514.52,431.00 514.75,431.00 514.97,431.00 515.20,431.00 515.43,431.00 515.65,431.00 515.88,431.00 516.11,431.00 516.33,431.00 516.56,431.00 516.78,431.00 517.01,431.00 517.24,431.00 517.46,431.00 517.69,431.00 517.92,431.00 518.14,431.00 518.37,431.00 518.60,431.00 518.82,431.00 519.05,431.00 519.27,431.00 519.50,431.00 519.73,431.00 519.95,431.00 520.18,431.00 520.41,431.00 520.63,431.00 520.86,431.00 521.08,431.00 521.31,431.00 521.54,431.00 521.76,431.00 521.99,431.00 522.22,431.00 522.44,431.00 522.67,431.00 522.90,431.00 523.12,431.00 523.35,431.00 523.57,431.00 523.80,431.00 524.03,431.00 524.25,431.00 524.48,431.00 524.71,431.00 524.93,431.00 525.16,431.00 525.39,431.00 525.61,431.00 525.84,431.00 526.06,431.00 526.29,431.00 526.52,431.00 526.74,431.00 526.97,431.00 527.20,431.00 527.42,431.00 527.65,431.00 527.87,431.00 528.10,431.00 528.33,431.00 528.55,431.00 528.78,431.00 529.01,431.00 529.23,431.00 529.46,431.00 529.69,431.00 529.91,431.00 530.14,431.00 530.36,431.00 530.59,431.00 530.82,431.00 531.04,431.00 531.27,431.00 531.50,431.00 531.72,431.00 531.95,431.00 532.17,431.00 532.40,431.00 532.63,431.00 532.85,431.00 533.08,431.00 533.31,431.00 533.53,431.00 533.76,431.00 533.99,431.00 534.21,431.00 534.44,431.00 534.66,431.00 534.89,431.00 535.12,431.00 535.34,431.00 535.57,431.00 535.80,431.00 536.02,431.00 536.25,431.00 536.48,431.00 536.70,431.00 536.93,431.00 537.15,431.00 537.38,431.00 537.61,431.00 537.83,431.00 538.06,431.00 538.29,431.00 538.51,431.00 538.74,431.00 538.96,431.00 539.19,431.00 539.42,431.00 539.64,431.00 539.87,431.00 540.10,431.00 540.32,431.00 540.55,431.00 540.78,431.00 541.00,431.00 541.23,431.00 541.45,431.00 541.68,431.00 541.91,431.00 542.13,431.00 542.36,431.00 542.59,431.00 542.81,431.00 543.04,431.00 543.26,431.00 543.49,431.00 543.72,431.00 543.94,431.00 544.17,431.00 544.40,431.00 544.62,431.00 544.85,431.00 545.08,431.00 545.30,431.00 545.53,431.00 545.75,431.00 545.98,431.00 546.21,431.00 546.43,431.00 546.66,431.00 546.89,431.00 547.11,431.00 547.34,431.00 547.57,431.00 547.79,431.00 548.02,431.00 548.24,431.00 548.47,431.00 548.70,431.00 548.92,431.00 549.15,431.00 549.38,431.00 549.60,431.00 549.83,431.00 550.05,431.00 550.28,431.00 550.51,431.00 550.73,431.00 550.96,431.00 551.19,431.00 551.41,431.00 551.64,431.00 551.87,431.00 552.09,431.00 552.32,431.00 552.54,431.00 552.77,431.00 553.00,431.00 553.22,431.00 553.45,431.00 553.68,431.00 553.90,431.00 554.13,431.00 554.36,431.00 554.58,431.00 554.81,431.00 555.03,431.00 555.26,431.00 555.49,431.00 555.71,431.00 555.94,431.00 556.17,431.00 556.39,431.00 556.62,431.00 556.84,431.00 557.07,431.00 557.30,431.00 557.52,431.00 557.75,431.00 557.98,431.00 558.20,431.00 558.43,431.00 558.66,431.00 558.88,431.00 559.11,431.00 559.33,431.00 559.56,431.00 559.79,431.00 560.01,431.00 560.24,431.00 560.47,431.00 560.69,431.00 560.92,431.00 561.14,431.00 561.37,431.00 561.60,431.00 561.82,431.00 562.05,431.00 562.28,431.00 562.50,431.00 562.73,431.00 562.96,431.00 563.18,431.00 563.41,431.00 563.63,431.00 563.86,431.00 564.09,431.00 564.31,431.00 564.54,431.00 564.77,431.00 564.99,431.00 565.22,431.00 565.45,431.00 565.67,431.00 565.90,431.00 566.12,431.00 566.35,431.00 566.58,431.00 566.80,431.00 567.03,431.00 567.26,431.00 567.48,431.00 567.71,431.00 567.93,431.00 568.16,431.00 568.39,431.00 568.61,431.00 568.84,431.00 569.07,431.00 569.29,431.00 569.52,431.00 569.75,431.00 569.97,431.00 570.20,431.00 570.42,431.00 570.65,431.00 570.88,431.00 571.10,431.00 571.33,431.00 571.56,431.00 571.78,431.00 572.01,431.00 572.23,431.00 572.46,431.00 572.69,431.00 572.91,431.00 573.14,431.00 573.37,431.00 573.59,431.00 573.82,431.00 574.05,431.00 574.27,431.00 574.50,431.00 574.72,431.00 574.95,431.00 575.18,431.00 575.40,431.00 575.63,431.00 575.86,431.00 576.08,431.00 576.31,431.00 576.54,431.00 576.76,431.00 576.99,431.00 577.21,431.00 577.44,431.00 577.67,431.00 577.89,431.00 578.12,431.00 578.35,431.00 578.57,431.00 578.80,431.00 579.02,431.00 579.25,431.00 579.48,431.00 579.70,431.00 579.93,431.00 580.16,431.00 580.38,431.00 580.61,431.00 580.84,431.00 581.06,431.00 581.29,431.00 581.51,431.00 581.74,431.00 581.97,431.00 582.19,431.00 582.42,431.00 582.65,431.00 582.87,431.00 583.10,431.00 583.33,431.00 583.55,431.00 583.78,431.00 584.00,431.00 584.23,431.00 584.46,431.00 584.68,431.00 584.91,431.00 585.14,431.00 585.36,431.00 585.59,431.00 585.81,431.00 586.04,431.00 586.27,431.00 586.49,431.00 586.72,431.00 586.95,431.00 587.17,431.00 587.40,431.00 587.63,431.00 587.85,431.00 588.08,431.00 588.30,431.00 588.53,431.00 588.76,431.00 588.98,431.00 589.21,431.00 589.44,431.00 589.66,431.00 589.89,431.00 590.11,431.00 590.34,431.00 590.57,431.00 590.79,431.00 591.02,431.00 591.25,431.00 591.47,431.00 591.70,431.00 591.93,431.00 592.15,431.00 592.38,431.00 592.60,431.00 592.83,431.00 593.06,431.00 593.28,431.00 593.51,431.00 593.74,431.00 593.96,431.00 594.19,431.00 594.42,431.00 594.64,431.00 594.87,431.00 595.09,431.00 595.32,431.00 595.55,431.00 595.77,431.00 596.00,431.00 596.23,431.00 596.45,431.00 596.68,431.00 596.90,431.00 597.13,431.00 597.36,431.00 597.58,431.00 597.81,431.00 598.04,431.00 598.26,431.00 598.49,431.00 598.72,431.00 598.94,431.00 599.17,431.00 599.39,431.00 599.62,431.00 599.85,431.00 600.07,431.00 600.30,431.00 600.53,431.00 600.75,431.00 600.98,431.00 601.20,431.00 601.43,431.00 601.66,431.00 601.88,431.00 602.11,431.00 602.34,431.00 602.56,431.00 602.79,431.00 603.02,431.00 603.24,431.00 603.47,431.00 603.69,431.00 603.92,431.00 604.15,431.00 604.37,431.00 604.60,431.00 604.83,431.00 605.05,431.00 605.28,431.00 605.51,431.00 605.73,431.00 605.96,431.00 606.18,431.00 606.41,431.00 606.64,431.00 606.86,431.00 607.09,431.00 607.32,431.00 607.54,431.00 607.77,431.00 607.99,431.00 608.22,431.00 608.45,431.00 608.67,431.00 608.90,431.00 609.13,431.00 609.35,431.00 609.58,431.00 609.81,431.00 610.03,431.00 610.26,431.00 610.48,431.00 610.71,431.00 610.94,431.00 611.16,431.00 611.39,431.00 611.62,431.00 611.84,431.00 612.07,431.00 612.30,431.00 612.52,431.00 612.75,431.00 612.97,431.00 613.20,431.00 613.43,431.00 613.65,431.00 613.88,431.00 614.11,431.00 614.33,431.00 614.56,431.00 614.78,431.00 615.01,431.00 615.24,431.00 615.46,431.00 615.69,431.00 615.92,431.00 616.14,431.00 616.37,431.00 616.60,431.00 616.82,431.00 617.05,431.00 617.27,431.00 617.50,431.00 617.73,431.00 617.95,431.00 618.18,431.00 618.41,431.00 618.63,431.00 618.86,431.00 619.08,431.00 619.31,431.00 619.54,431.00 619.76,431.00 619.99,431.00 620.22,431.00 620.44,431.00 620.67,431.00 620.90,431.00 621.12,431.00 621.35,431.00 621.57,431.00 621.80,431.00 622.03,431.00 622.25,431.00 622.48,431.00 622.71,431.00 622.93,431.00 623.16,431.00 623.39,431.00 623.61,431.00 623.84,431.00 624.06,431.00 624.29,431.00 624.52,431.00 624.74,431.00 624.97,431.00 625.20,431.00 625.42,431.00 625.65,431.00 625.87,431.00 626.10,431.00 626.33,431.00 626.55,431.00 626.78,431.00 627.01,431.00 627.23,431.00 627.46,431.00 627.69,431.00 627.91,431.00 628.14,431.00 628.36,431.00 628.59,431.00 628.82,431.00 629.04,431.00 629.27,431.00 629.50,431.00 629.72,431.00 629.95,431.00 630.17,431.00 630.40,431.00 630.63,431.00 630.85,431.00 631.08,431.00 631.31,431.00 631.53,431.00 631.76,431.00 631.99,431.00 632.21,431.00 632.44,431.00 632.66,431.00 632.89,431.00 633.12,431.00 633.34,431.00 633.57,431.00 633.80,431.00 634.02,431.00 634.25,431.00 634.48,431.00 634.70,431.00 634.93,431.00 635.15,431.00 635.38,431.00 635.61,431.00 635.83,431.00 636.06,431.00 636.29,431.00 636.51,431.00 636.74,431.00 636.96,431.00 637.19,431.00 637.42,431.00 637.64,431.00 637.87,431.00 638.10,431.00 638.32,431.00 638.55,431.00 638.78,431.00 639.00,431.00 639.23,431.00 639.45,431.00 639.68,431.00 639.91,431.00 640.00,431.00"/>
<polyline fill="none" stroke="#1a881a" stroke-opacity="0.8" stroke-width="1.4" points="412.90,421.92 413.81,421.71 414.71,421.50 415.62,421.29 416.52,421.07 417.43,420.86 418.33,420.64 419.24,420.41 420.14,420.19 421.05,419.96 421.95,419.73 422.86,419.50 423.76,419.26 424.67,419.03 425.57,418.79 426.48,418.55 427.38,418.30 428.29,418.06 429.20,417.81 430.10,417.56 431.01,417.31 431.91,417.06 432.82,416.81 433.72,416.55 434.63,416.30 435.53,416.04 436.44,415.78 437.34,415.52 438.25,415.26 439.15,415.00 440.06,414.74 440.96,414.48 441.87,414.21 442.78,413.95 443.68,413.68 444.59,413.42 445.49,413.15 446.40,412.89 447.30,412.62 448.21,412.36 449.11,412.09 450.02,411.83 450.92,411.56 451.83,411.30 452.73,411.04 453.64,410.78 454.54,410.52 455.45,410.26 456.35,410.00 457.26,409.74 458.17,409.49 459.07,409.24 459.98,408.98 460.88,408.74 461.79,408.49 462.69,408.24 463.60,408.00 464.50,407.76 465.41,407.52 466.31,407.29 467.22,407.05 468.12,406.82 469.03,406.60 469.93,406.38 470.84,406.16 471.75,405.94 472.65,405.73 473.56,405.52 474.46,405.31 475.37,405.11 476.27,404.92 477.18,404.72 478.08,404.54 478.99,404.35 479.89,404.17 480.80,404.00 481.70,403.83 482.61,403.66 483.51,403.50 484.42,403.35 485.32,403.20 486.23,403.05 487.14,402.92 488.04,402.78 488.95,402.65 489.85,402.53 490.76,402.41 491.66,402.30 492.57,402.20 493.47,402.10 494.38,402.01 495.28,401.92 496.19,401.84 497.09,401.76 498.00,401.69 498.90,401.63 499.81,401.57 500.72,401.52 501.62,401.48 502.53,401.44 503.43,401.41 504.34,401.39 505.24,401.37 506.15,401.36 507.05,401.35 507.96,401.35 508.86,401.36 509.77,401.37 510.67,401.39 511.58,401.42 512.48,401.45 513.39,401.49 514.29,401.54 515.20,401.59 516.11,401.65 517.01,401.72 517.92,401.79 518.82,401.86 519.73,401.95 520.63,402.04 521.54,402.13 522.44,402.23 523.35,402.34 524.25,402.45 525.16,402.57 526.06,402.70 526.97,402.83 527.87,402.96 528.78,403.10 529.69,403.25 530.59,403.40 531.50,403.56 532.40,403.72 533.31,403.88 534.21,404.06 535.12,404.23 536.02,404.41 536.93,404.60 537.83,404.79 538.74,404.98 539.64,405.18 540.55,405.38 541.45,405.59 542.36,405.80 543.26,406.01 544.17,406.23 545.08,406.45 545.98,406.67 546.89,406.90 547.79,407.13 548.70,407.37 549.60,407.60 550.51,407.84 551.41,408.08 552.32,408.33 553.22,408.57 554.13,408.82 555.03,409.07 555.94,409.32 556.84,409.58 557.75,409.83 558.66,410.09 559.56,410.35 560.47,410.61 561.37,410.87 562.28,411.13 563.18,411.39 564.09,411.65 564.99,411.92 565.90,412.18 566.80,412.45 567.71,412.71 568.61,412.98 569.52,413.24 570.42,413.51 571.33,413.77 572.23,414.04 573.14,414.30 574.05,414.56 574.95,414.83 575.86,415.09 576.76,415.35 577.67,415.61 578.57,415.87 579.48,416.13 580.38,416.39 581.29,416.64 582.19,416.90 583.10,417.15 584.00,417.40 584.91,417.65 585.81,417.90 586.72,418.14 587.63,418.39 588.53,418.63 589.44,418.87 590.34,419.11 591.25,419.34 592.15,419.58 593.06,419.81 593.96,420.04 594.87,420.26 595.77,420.49 596.68,420.71 597.58,420.93 598.49,421.15 599.39,421.36 600.30,421.57 601.20,421.78 602.11,421.99 603.02,422.19 603.92,422.39 604.83,422.59 605.73,422.79 606.64,422.98 607.54,423.17 608.45,423.36 609.35,423.54 610.26,423.72 611.16,423.90 612.07,424.08 612.97,424.25 613.88,424.42 614.78,424.59 615.69,424.75 616.60,424.91 617.50,425.07 618.41,425.22 619.31,425.38 620.22,425.53 621.12,425.67 622.03,425.82 622.93,425.96 623.84,426.10 624.74,426.23 625.65,426.37 626.55,426.50 627.46,426.62 628.36,426.75 629.27,426.87 630.17,426.99 631.08,427.11 631.99,427.22 632.89,427.33 633.80,427.44 634.70,427.55 635.61,427.65 636.51,427.76 637.42,427.86 638.32,427.95 639.23,428.05 640.00,428.13"/>
<circle cx="415.62" cy="431.00" r="1.7" fill="#0000ff"/>
<circle cx="417.43" cy="431.00" r="1.7" fill="#0000ff"/>
<circle cx="419.24" cy="431.00" r="1.7" fill="#0000ff"/>
<circle cx="422.86" cy="431.00" r="1.7" fill="#0000ff"/>
<circle cx="425.57" cy="430.04" r="1.7" fill="#0000ff"/>
<circle cx="427.38" cy="428.12" r="1.7" fill="#0000ff"/>
<circle cx="430.10" cy="418.53" r="1.7" fill="#0000ff"/>
<circle cx="431.91" cy="409.90" r="1.7" fill="#0000ff"/>
<circle cx="434.63" cy="403.19" r="1.7" fill="#0000ff"/>
<circle cx="435.53" cy="406.06" r="1.7" fill="#0000ff"/>
<circle cx="436.44" cy="413.74" r="1.7" fill="#0000ff"/>
<circle cx="437.34" cy="423.33" r="1.7" fill="#0000ff"/>
<circle cx="439.15" cy="428.12" r="1.7" fill="#0000ff"/>
<circle cx="442.78" cy="431.00" r="1.7" fill="#0000ff"/>
<circle cx="445.49" cy="431.00" r="1.7" fill="#0000ff"/>
<circle cx="449.11" cy="431.00" r="1.7" fill="#0000ff"/>
<circle cx="452.73" cy="431.00" r="1.7" fill="#0000ff"/>
<text x="451.44" y="248.00" font-family="'Liberation Sans',sans-serif" font-size="10" fill="#2b2b2b" stroke="#2b2b2b" stroke-width="0.3" transform="matrix(1,0,0,0.88,0,29.760)" xml:space="preserve">48</text>
<text x="454.2" y="270" font-family="'Liberation Sans',sans-serif" font-size="24.5" fill="#2b2b2b" stroke="#2b2b2b" stroke-width="0.35">&#8747;</text>
<text x="454.12" y="286.00" font-family="'Liberation Sans',sans-serif" font-size="10" fill="#2b2b2b" stroke="#2b2b2b" stroke-width="0.3" transform="matrix(1,0,0,0.88,0,34.320)" xml:space="preserve">0</text>
<text x="466.30" y="267.80" font-family="'Liberation Sans',sans-serif" font-size="11" font-style="italic" fill="#2b2b2b" stroke="#2b2b2b" stroke-width="0.3" transform="matrix(1,0,0,0.88,0,32.136)" xml:space="preserve">βs</text>
<text x="482.63" y="274.00" font-family="'Liberation Sans',sans-serif" font-size="10" fill="#2b2b2b" stroke="#2b2b2b" stroke-width="0.3" transform="matrix(1,0,0,0.88,0,32.880)" xml:space="preserve">1</text>
<rect x="492.6" y="263.6" width="1.2" height="1.2" fill="#333"/>
<text x="497.73" y="266.70" font-family="'Liberation Sans',sans-serif" font-size="11" fill="#2b2b2b" stroke="#2b2b2b" stroke-width="0.3" transform="matrix(1,0,0,0.88,0,32.004)" xml:space="preserve">exp</text>
<path d="M522.30,233.70 Q520.60,235.65 520.60,240.20 L520.60,287.50 Q520.60,292.05 522.30,294.00" fill="none" stroke="#444" stroke-width="1.3" stroke-linecap="round"/>
<rect x="526.3" y="263.7" width="5.7" height="1.1" fill="#333"/>
<rect x="536.3" y="263" width="64.5" height="1.2" fill="#555"/>
<path d="M540.00,242.20 Q537.60,244.15 537.60,248.70 L537.60,255.50 Q537.60,260.05 540.00,262.00" fill="none" stroke="#555" stroke-width="1.3" stroke-linecap="round"/>
<text x="543.28" y="252.10" font-family="'Liberation Sans',sans-serif" font-size="11" fill="#2b2b2b" stroke="#2b2b2b" stroke-width="0.3" transform="matrix(1,0,0,0.88,0,30.252)" xml:space="preserve">t</text>
<rect x="552.6" y="248.1" width="5.7" height="1.1" fill="#333"/>
<text x="563.60" y="252.10" font-family="'Liberation Sans',sans-serif" font-size="11" font-style="italic" fill="#2b2b2b" stroke="#2b2b2b" stroke-width="0.3" transform="matrix(1,0,0,0.88,0,30.252)" xml:space="preserve">βs</text>
<text x="580.27" y="260.00" font-family="'Liberation Sans',sans-serif" font-size="10" fill="#2b2b2b" stroke="#2b2b2b" stroke-width="0.3" transform="matrix(1,0,0,0.88,0,31.200)" xml:space="preserve">2</text>
<path d="M588.50,242.20 Q591.00,244.15 591.00,248.70 L591.00,255.50 Q591.00,260.05 588.50,262.00" fill="none" stroke="#555" stroke-width="1.3" stroke-linecap="round"/>
<text x="594.12" y="242.90" font-family="'Liberation Sans',sans-serif" font-size="10" fill="#2b2b2b" stroke="#2b2b2b" stroke-width="0.3" transform="matrix(1,0,0,0.88,0,29.148)" xml:space="preserve">2</text>
<text x="540.22" y="282.60" font-family="'Liberation Sans',sans-serif" font-size="10" fill="#2b2b2b" stroke="#2b2b2b" stroke-width="0.3" transform="matrix(1,0,0,0.88,0,33.912)" xml:space="preserve">2</text>
<rect x="549.2" y="278.2" width="1.2" height="1.2" fill="#333"/>
<path d="M557.10,274.00 Q554.60,275.90 554.60,280.34 L554.60,286.86 Q554.60,291.30 557.10,293.20" fill="none" stroke="#555" stroke-width="1.3" stroke-linecap="round"/>
<text x="560.05" y="282.60" font-family="'Liberation Sans',sans-serif" font-size="11" font-style="italic" fill="#2b2b2b" stroke="#2b2b2b" stroke-width="0.3" transform="matrix(1,0,0,0.88,0,33.912)" xml:space="preserve">βs</text>
<text x="577.15" y="290.40" font-family="'Liberation Sans',sans-serif" font-size="10" fill="#2b2b2b" stroke="#2b2b2b" stroke-width="0.3" transform="matrix(1,0,0,0.88,0,34.848)" xml:space="preserve">3</text>
<path d="M585.00,274.00 Q587.40,275.90 587.40,280.34 L587.40,286.86 Q587.40,291.30 585.00,293.20" fill="none" stroke="#555" stroke-width="1.3" stroke-linecap="round"/>
<text x="590.27" y="274.80" font-family="'Liberation Sans',sans-serif" font-size="10" fill="#2b2b2b" stroke="#2b2b2b" stroke-width="0.3" transform="matrix(1,0,0,0.88,0,32.976)" xml:space="preserve">2</text>
<path d="M603.50,233.70 Q605.20,235.65 605.20,240.20 L605.20,287.50 Q605.20,292.05 603.50,294.00" fill="none" stroke="#444" stroke-width="1.3" stroke-linecap="round"/>
<text x="608.71" y="266.40" font-family="'Liberation Mono',monospace" font-size="11" fill="#2b2b2b" stroke="#2b2b2b" stroke-width="0.2" transform="matrix(1,0,0,0.86,0,37.296)" xml:space="preserve">d</text>
<text x="620.93" y="266.40" font-family="'Liberation Sans',sans-serif" font-size="11" fill="#2b2b2b" stroke="#2b2b2b" stroke-width="0.3" transform="matrix(1,0,0,0.88,0,31.968)" xml:space="preserve">t</text>
<rect x="630" y="262" width="9" height="1" fill="#2b2b2b"/>
<rect x="630" y="265" width="9" height="1" fill="#2b2b2b"/>
<text x="640.63 647.13 653.63 660.13 666.63 673.13 679.63 686.13" y="266.70" font-family="'Liberation Mono',monospace" font-size="11" fill="#2b2b2b" stroke="#2b2b2b" stroke-width="0.2" transform="matrix(1,0,0,0.86,0,37.338)" xml:space="preserve">217.O961</text>
<path d="M343,487.3 Q340.3,488 340.5,492 L340.6,514 Q340.5,517.3 338.3,517.8 Q340.5,518.3 340.6,521.5 L340.6,542 Q340.3,546 343,546.5" fill="none" stroke="#505050" stroke-width="1.2"/>
<text x="344.60 351.20 357.81 364.41" y="496.60" font-family="'Liberation Mono',monospace" font-size="11" font-style="italic" fill="#2b2b2b" stroke="#2b2b2b" stroke-width="0.16000000000000003" transform="matrix(1,0,0,0.86,0,69.524)" xml:space="preserve">data</text>
<text x="344.72 351.25 357.77" y="511.80" font-family="'Liberation Mono',monospace" font-size="11" font-style="italic" fill="#2b2b2b" stroke="#2b2b2b" stroke-width="0.16000000000000003" transform="matrix(1,0,0,0.86,0,71.652)" xml:space="preserve">FIT</text>
<text x="344.72 351.14 357.55 363.97" y="527.00" font-family="'Liberation Mono',monospace" font-size="11" font-style="italic" fill="#2b2b2b" stroke="#2b2b2b" stroke-width="0.16000000000000003" transform="matrix(1,0,0,0.86,0,73.780)" xml:space="preserve">FIT2</text>
<text x="344.60 351.37 358.14 364.91 371.68 378.45 385.23" y="542.20" font-family="'Liberation Mono',monospace" font-size="11" font-style="italic" fill="#2b2b2b" stroke="#2b2b2b" stroke-width="0.16000000000000003" transform="matrix(1,0,0,0.86,0,75.908)" xml:space="preserve">dataFit</text></svg></body></html>
